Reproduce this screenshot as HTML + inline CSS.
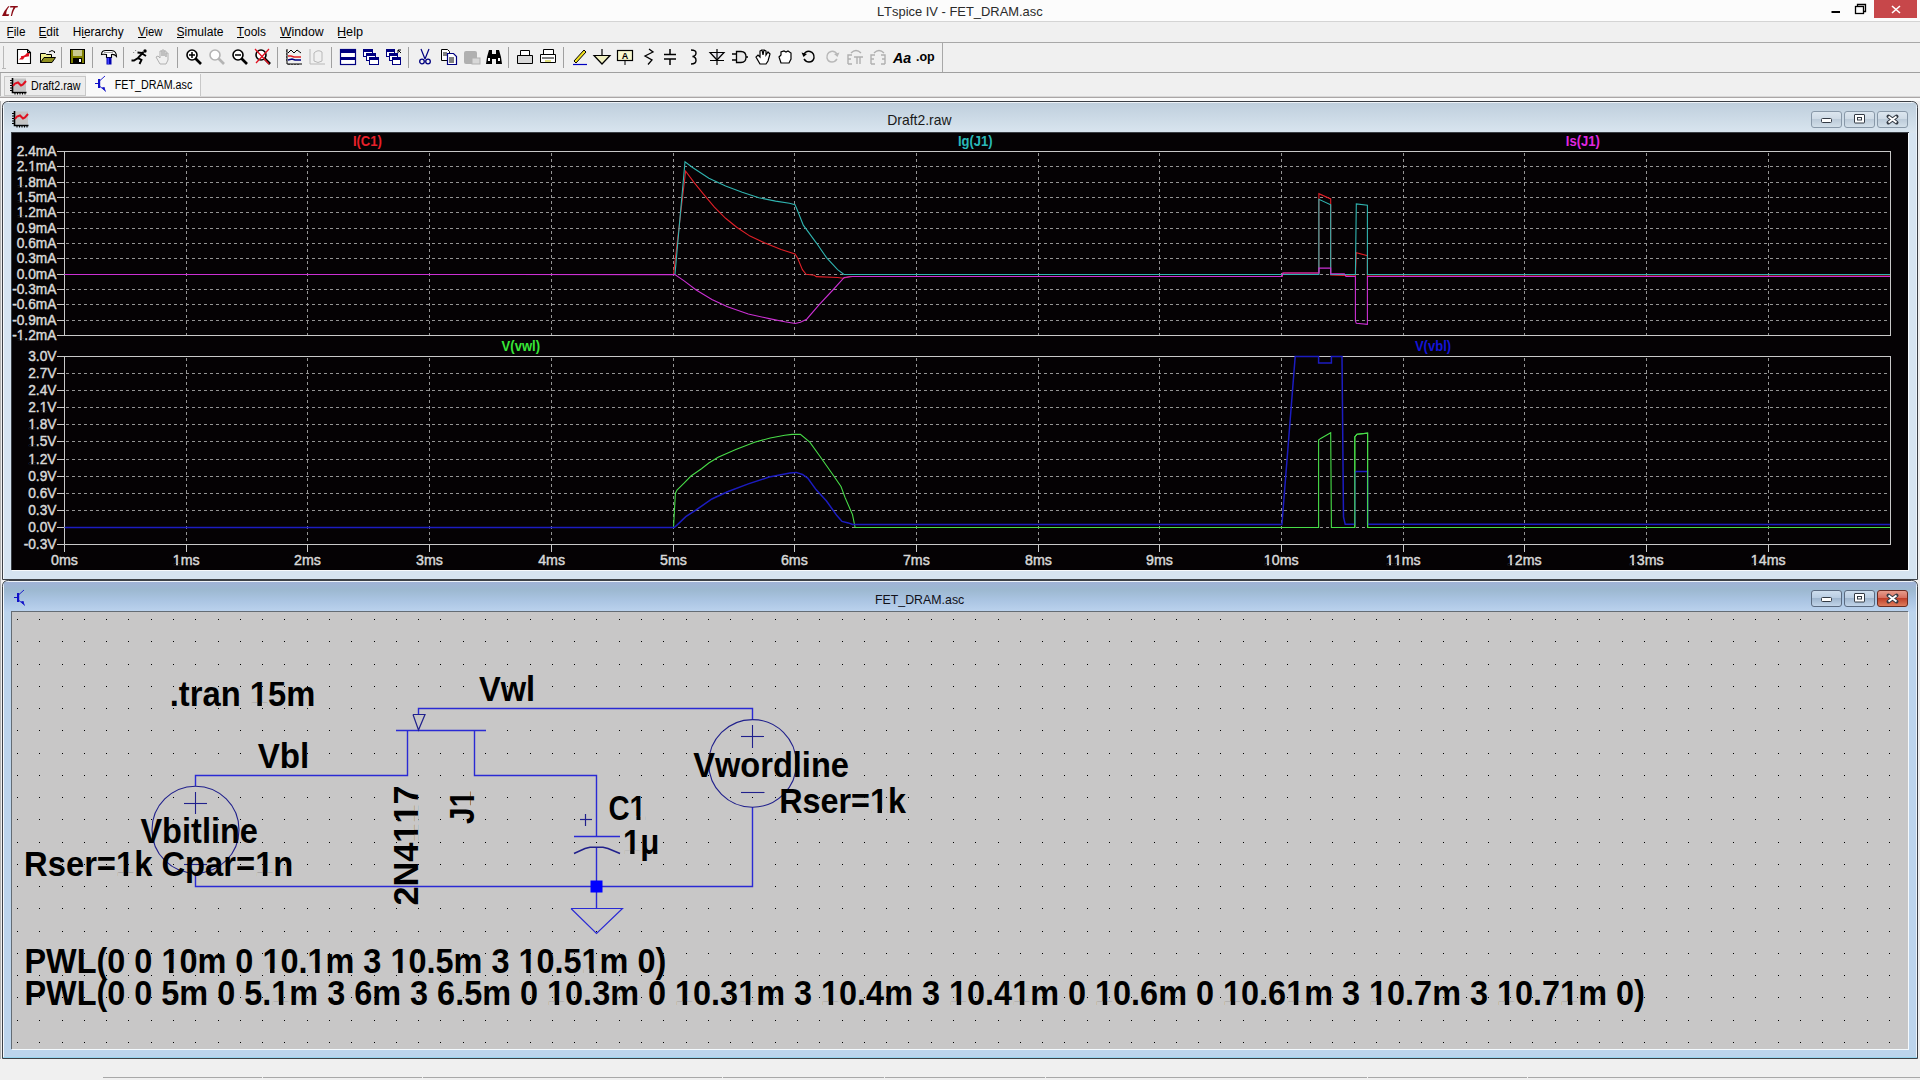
<!DOCTYPE html>
<html><head><meta charset="utf-8"><style>
body{margin:0;width:1920px;height:1080px;overflow:hidden;background:#f0f0f0}
svg{position:absolute;left:0;top:0;display:block}
text{font-family:"Liberation Sans", sans-serif}
</style></head><body>
<svg width="1920" height="1080" viewBox="0 0 1920 1080" font-family='"Liberation Sans", sans-serif'>
<rect x="0" y="0" width="1920" height="1080" fill="#f0f0f0" /><rect x="0" y="0" width="1920" height="21" fill="#fcfcfc" /><line x1="0" y1="21.5" x2="1920" y2="21.5" stroke="#d4d4d4" stroke-width="1"/><path d="M2,16 L8.5,16 L9.3,14.3 L6.2,14.3 Q6,10 9.6,6.2 L8.2,6.2 Q4.5,10 2,16 Z" fill="#8a0a14"/><path d="M10.8,16 L12,16 Q13.5,10 15.6,7.6 L17.4,7.6 L18,6 L10.3,6 L10,7.6 L13.5,7.6 Q11.5,11 10.8,16 Z" fill="#8a0a14"/><g transform="translate(876.94,15.8) scale(0.9942,1)"><text style="font-kerning:none" font-size="13" font-weight="normal" fill="#2a2a2a">LTspice IV - FET_DRAM.asc</text></g><rect x="1831.5" y="11" width="8.5" height="2" fill="#000" /><rect x="1855.5" y="6.5" width="8" height="7" fill="none" stroke="#000" stroke-width="1.3"/><path d="M1857.5,6.5 V4.5 H1865.5 V11.5 H1863.5" fill="none" stroke="#000" stroke-width="1.3"/><rect x="1874" y="0" width="43" height="18" fill="#c7474a" /><path d="M1892,6 L1900,13 M1900,6 L1892,13" stroke="#fff" stroke-width="1.6"/><rect x="0" y="22" width="1920" height="20" fill="#f0f0f0" /><line x1="0" y1="42.5" x2="1920" y2="42.5" stroke="#a8a8a8" stroke-width="1"/><g transform="translate(6.53,36) scale(0.9821,1)"><text style="font-kerning:none" font-size="12" font-weight="normal" fill="#000">File</text></g><g transform="translate(38.43,36) scale(0.9895,1)"><text style="font-kerning:none" font-size="12" font-weight="normal" fill="#000">Edit</text></g><g transform="translate(72.77,36) scale(0.9933,1)"><text style="font-kerning:none" font-size="12" font-weight="normal" fill="#000">Hierarchy</text></g><g transform="translate(137.95,36) scale(0.9428,1)"><text style="font-kerning:none" font-size="12" font-weight="normal" fill="#000">View</text></g><g transform="translate(176.45,36) scale(1.0086,1)"><text style="font-kerning:none" font-size="12" font-weight="normal" fill="#000">Simulate</text></g><g transform="translate(236.73,36) scale(0.9951,1)"><text style="font-kerning:none" font-size="12" font-weight="normal" fill="#000">Tools</text></g><g transform="translate(279.95,36) scale(1.0256,1)"><text style="font-kerning:none" font-size="12" font-weight="normal" fill="#000">Window</text></g><g transform="translate(336.96,36) scale(1.0564,1)"><text style="font-kerning:none" font-size="12" font-weight="normal" fill="#000">Help</text></g><line x1="7.5" y1="37.5" x2="14" y2="37.5" stroke="#000" stroke-width="1"/><line x1="39.4" y1="37.5" x2="46.5" y2="37.5" stroke="#000" stroke-width="1"/><line x1="82" y1="37.5" x2="85.5" y2="37.5" stroke="#000" stroke-width="1"/><line x1="138" y1="37.5" x2="146" y2="37.5" stroke="#000" stroke-width="1"/><line x1="177" y1="37.5" x2="184" y2="37.5" stroke="#000" stroke-width="1"/><line x1="237" y1="37.5" x2="244" y2="37.5" stroke="#000" stroke-width="1"/><line x1="280" y1="37.5" x2="291" y2="37.5" stroke="#000" stroke-width="1"/><line x1="338" y1="37.5" x2="346" y2="37.5" stroke="#000" stroke-width="1"/><rect x="0" y="43" width="1920" height="29" fill="#f0f0f0" /><line x1="0" y1="72.5" x2="1920" y2="72.5" stroke="#a0a0a0" stroke-width="1"/><line x1="3.5" y1="46" x2="3.5" y2="69" stroke="#b8b8b8" stroke-width="1"/><line x1="2" y1="68.5" x2="6" y2="68.5" stroke="#b8b8b8" stroke-width="1"/><line x1="942.5" y1="42" x2="942.5" y2="72" stroke="#a8a8a8" stroke-width="1"/><line x1="61.5" y1="47" x2="61.5" y2="68" stroke="#a0a0a0" stroke-width="1"/><line x1="92.5" y1="47" x2="92.5" y2="68" stroke="#a0a0a0" stroke-width="1"/><line x1="123.5" y1="47" x2="123.5" y2="68" stroke="#a0a0a0" stroke-width="1"/><line x1="177.5" y1="47" x2="177.5" y2="68" stroke="#a0a0a0" stroke-width="1"/><line x1="277.5" y1="47" x2="277.5" y2="68" stroke="#a0a0a0" stroke-width="1"/><line x1="331.5" y1="47" x2="331.5" y2="68" stroke="#a0a0a0" stroke-width="1"/><line x1="408.5" y1="47" x2="408.5" y2="68" stroke="#a0a0a0" stroke-width="1"/><line x1="508.5" y1="47" x2="508.5" y2="68" stroke="#a0a0a0" stroke-width="1"/><line x1="563.5" y1="47" x2="563.5" y2="68" stroke="#a0a0a0" stroke-width="1"/><rect x="0" y="73" width="1920" height="24" fill="#f0f0f0" /><line x1="0.5" y1="73" x2="0.5" y2="1080" stroke="#b4b4b4" stroke-width="1"/><rect x="4.5" y="76.5" width="81" height="19" fill="#ececec" stroke="#c8c8c8"/><rect x="86" y="74" width="114" height="22" fill="#f9f9f9" /><line x1="200.5" y1="74" x2="200.5" y2="96" stroke="#c8c8c8" stroke-width="1"/><g transform="translate(31.12,90) scale(0.8917,1)"><text style="font-kerning:none" font-size="12" font-weight="normal" fill="#000">Draft2.raw</text></g><g transform="translate(114.82,88.8) scale(0.8937,1)"><text style="font-kerning:none" font-size="12" font-weight="normal" fill="#000">FET_DRAM.asc</text></g><line x1="0" y1="96.5" x2="1920" y2="96.5" stroke="#d8d8d8" stroke-width="1"/><g transform="translate(10,78)"><rect x="3" y="0.5" width="13" height="13" fill="#c4c4c4"/><path d="M2.5,0 V14.5 H16.5" fill="none" stroke="#000" stroke-width="1.6"/><path d="M0,2.5 H2.5 M0,5 H2.5 M0,7.5 H2.5 M0,10 H2.5 M0,12.5 H2.5 M5,14 V16.5 M7.5,14 V16.5 M10,14 V16.5 M12.5,14 V16.5 M15,14 V16.5" stroke="#000" stroke-width="1.1"/><path d="M3,8 L5,5.5 L8,4.5 L11,7.5 L13,6.5 L16,3" fill="none" stroke="#e01020" stroke-width="2"/></g><g transform="translate(95,76)" fill="none" stroke="#1010c8"><path d="M0,7.5 H3.5" stroke-width="1"/><rect x="3" y="3" width="2.2" height="9" fill="#1010c8" stroke="none"/><path d="M5,4.5 L10,0 M5,10.5 L11,15.5" stroke-width="0.9"/><path d="M6.5,11.5 L10.5,15 L9.5,11 Z" fill="#1010c8" stroke="none"/></g><line x1="0" y1="97.5" x2="1920" y2="97.5" stroke="#aaa6a6" stroke-width="1"/><rect x="0" y="98" width="1920" height="3" fill="#fbfbfb" /><defs>
<linearGradient id="t1" x1="0" y1="0" x2="0" y2="1"><stop offset="0" stop-color="#bfcfdd"/><stop offset="1" stop-color="#d9e5ef"/></linearGradient>
<linearGradient id="t2" x1="0" y1="0" x2="0" y2="1"><stop offset="0" stop-color="#a0b2d6"/><stop offset="0.25" stop-color="#9cb8d0"/><stop offset="0.6" stop-color="#aac4e2"/><stop offset="1" stop-color="#bcd3ee"/></linearGradient>
<linearGradient id="bt" x1="0" y1="0" x2="0" y2="1"><stop offset="0" stop-color="#dde7f0"/><stop offset="0.45" stop-color="#cfdbe6"/><stop offset="0.5" stop-color="#bccbd9"/><stop offset="1" stop-color="#d4e0ea"/></linearGradient>
<linearGradient id="bt2" x1="0" y1="0" x2="0" y2="1"><stop offset="0" stop-color="#cfdeee"/><stop offset="0.45" stop-color="#b9cde2"/><stop offset="0.5" stop-color="#9fb6cf"/><stop offset="1" stop-color="#c4d6ea"/></linearGradient>
<linearGradient id="cl2" x1="0" y1="0" x2="0" y2="1"><stop offset="0" stop-color="#e8a090"/><stop offset="0.45" stop-color="#d87060"/><stop offset="0.5" stop-color="#c0402a"/><stop offset="1" stop-color="#e08060"/></linearGradient>
<pattern id="dots" x="17" y="619" width="22.286" height="22.25" patternUnits="userSpaceOnUse"><rect x="0" y="0" width="1.1" height="1.1" fill="#000"/></pattern>
</defs><clipPath id="clip101"><path d="M3,579 V108 Q3,102 9,102 H1911 Q1917,102 1917,108 V579 Z"/></clipPath><path d="M2.5,579.5 V107.5 Q2.5,101.5 8.5,101.5 H1911.5 Q1917.5,101.5 1917.5,107.5 V579.5 Z" fill="#d6e4f1" stroke="#3c4046" stroke-width="1"/><g clip-path="url(#clip101)"><rect x="3" y="102" width="1914" height="1" fill="#eef3f8" /><rect x="3" y="103" width="1914" height="30" fill="url(#t1)" /><line x1="3.5" y1="103" x2="3.5" y2="579" stroke="#f4f8fc" stroke-width="1"/><line x1="1916.5" y1="103" x2="1916.5" y2="579" stroke="#eaf2fa" stroke-width="1"/></g><rect x="11" y="132" width="1898" height="438" fill="#3a3e44" /><rect x="12" y="133" width="1896" height="437" fill="#050204" /><rect x="12" y="570" width="1896" height="1" fill="#f6f9fc" /><line x1="1908.5" y1="133" x2="1908.5" y2="571" stroke="#f6f9fc" stroke-width="1"/><g transform="translate(887.26,124.9) scale(0.9959,1)"><text style="font-kerning:none" font-size="14" font-weight="normal" fill="#1a1a1a">Draft2.raw</text></g><g transform="translate(12,111)"><rect x="3" y="0.5" width="13" height="13" fill="#c4c4c4"/><path d="M2.5,0 V14.5 H16.5" fill="none" stroke="#000" stroke-width="1.6"/><path d="M0,2.5 H2.5 M0,5 H2.5 M0,7.5 H2.5 M0,10 H2.5 M0,12.5 H2.5 M5,14 V16.5 M7.5,14 V16.5 M10,14 V16.5 M12.5,14 V16.5 M15,14 V16.5" stroke="#000" stroke-width="1.1"/><path d="M3,8 L5,5.5 L8,4.5 L11,7.5 L13,6.5 L16,3" fill="none" stroke="#e01020" stroke-width="2"/></g><rect x="1811.5" y="111.5" width="30" height="16" rx="2.5" fill="url(#bt)" stroke="#8898a8"/><rect x="1844.5" y="111.5" width="30" height="16" rx="2.5" fill="url(#bt)" stroke="#8898a8"/><rect x="1877.5" y="111.5" width="30" height="16" rx="2.5" fill="url(#bt)" stroke="#8898a8"/><rect x="1821.5" y="118.5" width="10" height="4" rx="1" fill="#fff" stroke="#333a44"/><rect x="1854.5" y="114.5" width="10" height="8.5" rx="0.5" fill="#fff" stroke="#333a44"/><rect x="1857.5" y="117.5" width="4" height="2.5" fill="none" stroke="#333a44"/><path d="M1888.5,116.5 L1896.5,122.5 M1896.5,116.5 L1888.5,122.5" stroke="#333a44" stroke-width="4" stroke-linecap="round"/><path d="M1888.5,116.5 L1896.5,122.5 M1896.5,116.5 L1888.5,122.5" stroke="#fff" stroke-width="2"/><line x1="57" y1="151.5" x2="1891" y2="151.5" stroke="#c8c8c8" stroke-width="1"/><line x1="57" y1="166.5" x2="64" y2="166.5" stroke="#c8c8c8" stroke-width="1"/><line x1="66" y1="166.5" x2="1890" y2="166.5" stroke="#949494" stroke-width="1" stroke-dasharray="3 3"/><line x1="57" y1="182.5" x2="64" y2="182.5" stroke="#c8c8c8" stroke-width="1"/><line x1="66" y1="182.5" x2="1890" y2="182.5" stroke="#949494" stroke-width="1" stroke-dasharray="3 3"/><line x1="57" y1="197.5" x2="64" y2="197.5" stroke="#c8c8c8" stroke-width="1"/><line x1="66" y1="197.5" x2="1890" y2="197.5" stroke="#949494" stroke-width="1" stroke-dasharray="3 3"/><line x1="57" y1="212.5" x2="64" y2="212.5" stroke="#c8c8c8" stroke-width="1"/><line x1="66" y1="212.5" x2="1890" y2="212.5" stroke="#949494" stroke-width="1" stroke-dasharray="3 3"/><line x1="57" y1="228.5" x2="64" y2="228.5" stroke="#c8c8c8" stroke-width="1"/><line x1="66" y1="228.5" x2="1890" y2="228.5" stroke="#949494" stroke-width="1" stroke-dasharray="3 3"/><line x1="57" y1="243.5" x2="64" y2="243.5" stroke="#c8c8c8" stroke-width="1"/><line x1="66" y1="243.5" x2="1890" y2="243.5" stroke="#949494" stroke-width="1" stroke-dasharray="3 3"/><line x1="57" y1="258.5" x2="64" y2="258.5" stroke="#c8c8c8" stroke-width="1"/><line x1="66" y1="258.5" x2="1890" y2="258.5" stroke="#949494" stroke-width="1" stroke-dasharray="3 3"/><line x1="57" y1="274.5" x2="64" y2="274.5" stroke="#c8c8c8" stroke-width="1"/><line x1="66" y1="274.5" x2="1890" y2="274.5" stroke="#949494" stroke-width="1" stroke-dasharray="3 3"/><line x1="57" y1="289.5" x2="64" y2="289.5" stroke="#c8c8c8" stroke-width="1"/><line x1="66" y1="289.5" x2="1890" y2="289.5" stroke="#949494" stroke-width="1" stroke-dasharray="3 3"/><line x1="57" y1="304.5" x2="64" y2="304.5" stroke="#c8c8c8" stroke-width="1"/><line x1="66" y1="304.5" x2="1890" y2="304.5" stroke="#949494" stroke-width="1" stroke-dasharray="3 3"/><line x1="57" y1="320.5" x2="64" y2="320.5" stroke="#c8c8c8" stroke-width="1"/><line x1="66" y1="320.5" x2="1890" y2="320.5" stroke="#949494" stroke-width="1" stroke-dasharray="3 3"/><line x1="57" y1="335.5" x2="1891" y2="335.5" stroke="#c8c8c8" stroke-width="1"/><line x1="57" y1="356.5" x2="1891" y2="356.5" stroke="#c8c8c8" stroke-width="1"/><line x1="57" y1="373.5" x2="64" y2="373.5" stroke="#c8c8c8" stroke-width="1"/><line x1="66" y1="373.5" x2="1890" y2="373.5" stroke="#949494" stroke-width="1" stroke-dasharray="3 3"/><line x1="57" y1="390.5" x2="64" y2="390.5" stroke="#c8c8c8" stroke-width="1"/><line x1="66" y1="390.5" x2="1890" y2="390.5" stroke="#949494" stroke-width="1" stroke-dasharray="3 3"/><line x1="57" y1="407.5" x2="64" y2="407.5" stroke="#c8c8c8" stroke-width="1"/><line x1="66" y1="407.5" x2="1890" y2="407.5" stroke="#949494" stroke-width="1" stroke-dasharray="3 3"/><line x1="57" y1="424.5" x2="64" y2="424.5" stroke="#c8c8c8" stroke-width="1"/><line x1="66" y1="424.5" x2="1890" y2="424.5" stroke="#949494" stroke-width="1" stroke-dasharray="3 3"/><line x1="57" y1="441.5" x2="64" y2="441.5" stroke="#c8c8c8" stroke-width="1"/><line x1="66" y1="441.5" x2="1890" y2="441.5" stroke="#949494" stroke-width="1" stroke-dasharray="3 3"/><line x1="57" y1="459.5" x2="64" y2="459.5" stroke="#c8c8c8" stroke-width="1"/><line x1="66" y1="459.5" x2="1890" y2="459.5" stroke="#949494" stroke-width="1" stroke-dasharray="3 3"/><line x1="57" y1="476.5" x2="64" y2="476.5" stroke="#c8c8c8" stroke-width="1"/><line x1="66" y1="476.5" x2="1890" y2="476.5" stroke="#949494" stroke-width="1" stroke-dasharray="3 3"/><line x1="57" y1="493.5" x2="64" y2="493.5" stroke="#c8c8c8" stroke-width="1"/><line x1="66" y1="493.5" x2="1890" y2="493.5" stroke="#949494" stroke-width="1" stroke-dasharray="3 3"/><line x1="57" y1="510.5" x2="64" y2="510.5" stroke="#c8c8c8" stroke-width="1"/><line x1="66" y1="510.5" x2="1890" y2="510.5" stroke="#949494" stroke-width="1" stroke-dasharray="3 3"/><line x1="57" y1="527.5" x2="64" y2="527.5" stroke="#c8c8c8" stroke-width="1"/><line x1="66" y1="527.5" x2="1890" y2="527.5" stroke="#949494" stroke-width="1" stroke-dasharray="3 3"/><line x1="57" y1="544.5" x2="1891" y2="544.5" stroke="#c8c8c8" stroke-width="1"/><line x1="64.5" y1="151" x2="64.5" y2="336" stroke="#c8c8c8" stroke-width="1"/><line x1="1890.5" y1="151" x2="1890.5" y2="336" stroke="#c8c8c8" stroke-width="1"/><line x1="64.5" y1="356" x2="64.5" y2="552" stroke="#c8c8c8" stroke-width="1"/><line x1="1890.5" y1="356" x2="1890.5" y2="545" stroke="#c8c8c8" stroke-width="1"/><line x1="186.5" y1="153" x2="186.5" y2="335" stroke="#949494" stroke-width="1" stroke-dasharray="3 3"/><line x1="186.5" y1="358" x2="186.5" y2="544" stroke="#949494" stroke-width="1" stroke-dasharray="3 3"/><line x1="186.5" y1="544" x2="186.5" y2="552" stroke="#c8c8c8" stroke-width="1"/><line x1="307.5" y1="153" x2="307.5" y2="335" stroke="#949494" stroke-width="1" stroke-dasharray="3 3"/><line x1="307.5" y1="358" x2="307.5" y2="544" stroke="#949494" stroke-width="1" stroke-dasharray="3 3"/><line x1="307.5" y1="544" x2="307.5" y2="552" stroke="#c8c8c8" stroke-width="1"/><line x1="429.5" y1="153" x2="429.5" y2="335" stroke="#949494" stroke-width="1" stroke-dasharray="3 3"/><line x1="429.5" y1="358" x2="429.5" y2="544" stroke="#949494" stroke-width="1" stroke-dasharray="3 3"/><line x1="429.5" y1="544" x2="429.5" y2="552" stroke="#c8c8c8" stroke-width="1"/><line x1="551.5" y1="153" x2="551.5" y2="335" stroke="#949494" stroke-width="1" stroke-dasharray="3 3"/><line x1="551.5" y1="358" x2="551.5" y2="544" stroke="#949494" stroke-width="1" stroke-dasharray="3 3"/><line x1="551.5" y1="544" x2="551.5" y2="552" stroke="#c8c8c8" stroke-width="1"/><line x1="673.5" y1="153" x2="673.5" y2="335" stroke="#949494" stroke-width="1" stroke-dasharray="3 3"/><line x1="673.5" y1="358" x2="673.5" y2="544" stroke="#949494" stroke-width="1" stroke-dasharray="3 3"/><line x1="673.5" y1="544" x2="673.5" y2="552" stroke="#c8c8c8" stroke-width="1"/><line x1="794.5" y1="153" x2="794.5" y2="335" stroke="#949494" stroke-width="1" stroke-dasharray="3 3"/><line x1="794.5" y1="358" x2="794.5" y2="544" stroke="#949494" stroke-width="1" stroke-dasharray="3 3"/><line x1="794.5" y1="544" x2="794.5" y2="552" stroke="#c8c8c8" stroke-width="1"/><line x1="916.5" y1="153" x2="916.5" y2="335" stroke="#949494" stroke-width="1" stroke-dasharray="3 3"/><line x1="916.5" y1="358" x2="916.5" y2="544" stroke="#949494" stroke-width="1" stroke-dasharray="3 3"/><line x1="916.5" y1="544" x2="916.5" y2="552" stroke="#c8c8c8" stroke-width="1"/><line x1="1038.5" y1="153" x2="1038.5" y2="335" stroke="#949494" stroke-width="1" stroke-dasharray="3 3"/><line x1="1038.5" y1="358" x2="1038.5" y2="544" stroke="#949494" stroke-width="1" stroke-dasharray="3 3"/><line x1="1038.5" y1="544" x2="1038.5" y2="552" stroke="#c8c8c8" stroke-width="1"/><line x1="1159.5" y1="153" x2="1159.5" y2="335" stroke="#949494" stroke-width="1" stroke-dasharray="3 3"/><line x1="1159.5" y1="358" x2="1159.5" y2="544" stroke="#949494" stroke-width="1" stroke-dasharray="3 3"/><line x1="1159.5" y1="544" x2="1159.5" y2="552" stroke="#c8c8c8" stroke-width="1"/><line x1="1281.5" y1="153" x2="1281.5" y2="335" stroke="#949494" stroke-width="1" stroke-dasharray="3 3"/><line x1="1281.5" y1="358" x2="1281.5" y2="544" stroke="#949494" stroke-width="1" stroke-dasharray="3 3"/><line x1="1281.5" y1="544" x2="1281.5" y2="552" stroke="#c8c8c8" stroke-width="1"/><line x1="1403.5" y1="153" x2="1403.5" y2="335" stroke="#949494" stroke-width="1" stroke-dasharray="3 3"/><line x1="1403.5" y1="358" x2="1403.5" y2="544" stroke="#949494" stroke-width="1" stroke-dasharray="3 3"/><line x1="1403.5" y1="544" x2="1403.5" y2="552" stroke="#c8c8c8" stroke-width="1"/><line x1="1524.5" y1="153" x2="1524.5" y2="335" stroke="#949494" stroke-width="1" stroke-dasharray="3 3"/><line x1="1524.5" y1="358" x2="1524.5" y2="544" stroke="#949494" stroke-width="1" stroke-dasharray="3 3"/><line x1="1524.5" y1="544" x2="1524.5" y2="552" stroke="#c8c8c8" stroke-width="1"/><line x1="1646.5" y1="153" x2="1646.5" y2="335" stroke="#949494" stroke-width="1" stroke-dasharray="3 3"/><line x1="1646.5" y1="358" x2="1646.5" y2="544" stroke="#949494" stroke-width="1" stroke-dasharray="3 3"/><line x1="1646.5" y1="544" x2="1646.5" y2="552" stroke="#c8c8c8" stroke-width="1"/><line x1="1768.5" y1="153" x2="1768.5" y2="335" stroke="#949494" stroke-width="1" stroke-dasharray="3 3"/><line x1="1768.5" y1="358" x2="1768.5" y2="544" stroke="#949494" stroke-width="1" stroke-dasharray="3 3"/><line x1="1768.5" y1="544" x2="1768.5" y2="552" stroke="#c8c8c8" stroke-width="1"/><g font-family='"Liberation Sans", sans-serif'><g transform="translate(16.72,156) scale(0.95,1)"><text style="font-kerning:none" font-size="14.5" fill="#d8d8d8" stroke="#d8d8d8" stroke-width="0.45">2.4mA</text></g><g transform="translate(16.72,171) scale(0.95,1)"><text style="font-kerning:none" font-size="14.5" fill="#d8d8d8" stroke="#d8d8d8" stroke-width="0.45">2.1mA</text><rect x="12.40" y="-1.53" width="3.04" height="2.28" fill="#050204"/><rect x="17.32" y="-1.53" width="3.23" height="2.28" fill="#050204"/></g><g transform="translate(16.72,187) scale(0.95,1)"><text style="font-kerning:none" font-size="14.5" fill="#d8d8d8" stroke="#d8d8d8" stroke-width="0.45">1.8mA</text><rect x="0.30" y="-1.53" width="3.04" height="2.28" fill="#050204"/><rect x="5.23" y="-1.53" width="3.23" height="2.28" fill="#050204"/></g><g transform="translate(16.72,202) scale(0.95,1)"><text style="font-kerning:none" font-size="14.5" fill="#d8d8d8" stroke="#d8d8d8" stroke-width="0.45">1.5mA</text><rect x="0.30" y="-1.53" width="3.04" height="2.28" fill="#050204"/><rect x="5.23" y="-1.53" width="3.23" height="2.28" fill="#050204"/></g><g transform="translate(16.72,217) scale(0.95,1)"><text style="font-kerning:none" font-size="14.5" fill="#d8d8d8" stroke="#d8d8d8" stroke-width="0.45">1.2mA</text><rect x="0.30" y="-1.53" width="3.04" height="2.28" fill="#050204"/><rect x="5.23" y="-1.53" width="3.23" height="2.28" fill="#050204"/></g><g transform="translate(16.72,233) scale(0.95,1)"><text style="font-kerning:none" font-size="14.5" fill="#d8d8d8" stroke="#d8d8d8" stroke-width="0.45">0.9mA</text></g><g transform="translate(16.72,248) scale(0.95,1)"><text style="font-kerning:none" font-size="14.5" fill="#d8d8d8" stroke="#d8d8d8" stroke-width="0.45">0.6mA</text></g><g transform="translate(16.72,263) scale(0.95,1)"><text style="font-kerning:none" font-size="14.5" fill="#d8d8d8" stroke="#d8d8d8" stroke-width="0.45">0.3mA</text></g><g transform="translate(16.72,279) scale(0.95,1)"><text style="font-kerning:none" font-size="14.5" fill="#d8d8d8" stroke="#d8d8d8" stroke-width="0.45">0.0mA</text></g><g transform="translate(12.13,294) scale(0.95,1)"><text style="font-kerning:none" font-size="14.5" fill="#d8d8d8" stroke="#d8d8d8" stroke-width="0.45">-0.3mA</text></g><g transform="translate(12.13,309) scale(0.95,1)"><text style="font-kerning:none" font-size="14.5" fill="#d8d8d8" stroke="#d8d8d8" stroke-width="0.45">-0.6mA</text></g><g transform="translate(12.13,325) scale(0.95,1)"><text style="font-kerning:none" font-size="14.5" fill="#d8d8d8" stroke="#d8d8d8" stroke-width="0.45">-0.9mA</text></g><g transform="translate(12.13,340) scale(0.95,1)"><text style="font-kerning:none" font-size="14.5" fill="#d8d8d8" stroke="#d8d8d8" stroke-width="0.45">-1.2mA</text><rect x="5.13" y="-1.53" width="3.04" height="2.28" fill="#050204"/><rect x="10.06" y="-1.53" width="3.23" height="2.28" fill="#050204"/></g><g transform="translate(28.22,361) scale(0.95,1)"><text style="font-kerning:none" font-size="14.5" fill="#d8d8d8" stroke="#d8d8d8" stroke-width="0.45">3.0V</text></g><g transform="translate(28.22,378) scale(0.95,1)"><text style="font-kerning:none" font-size="14.5" fill="#d8d8d8" stroke="#d8d8d8" stroke-width="0.45">2.7V</text></g><g transform="translate(28.22,395) scale(0.95,1)"><text style="font-kerning:none" font-size="14.5" fill="#d8d8d8" stroke="#d8d8d8" stroke-width="0.45">2.4V</text></g><g transform="translate(28.22,412) scale(0.95,1)"><text style="font-kerning:none" font-size="14.5" fill="#d8d8d8" stroke="#d8d8d8" stroke-width="0.45">2.1V</text><rect x="12.40" y="-1.53" width="3.04" height="2.28" fill="#050204"/><rect x="17.32" y="-1.53" width="3.23" height="2.28" fill="#050204"/></g><g transform="translate(28.22,429) scale(0.95,1)"><text style="font-kerning:none" font-size="14.5" fill="#d8d8d8" stroke="#d8d8d8" stroke-width="0.45">1.8V</text><rect x="0.30" y="-1.53" width="3.04" height="2.28" fill="#050204"/><rect x="5.23" y="-1.53" width="3.23" height="2.28" fill="#050204"/></g><g transform="translate(28.22,446) scale(0.95,1)"><text style="font-kerning:none" font-size="14.5" fill="#d8d8d8" stroke="#d8d8d8" stroke-width="0.45">1.5V</text><rect x="0.30" y="-1.53" width="3.04" height="2.28" fill="#050204"/><rect x="5.23" y="-1.53" width="3.23" height="2.28" fill="#050204"/></g><g transform="translate(28.22,464) scale(0.95,1)"><text style="font-kerning:none" font-size="14.5" fill="#d8d8d8" stroke="#d8d8d8" stroke-width="0.45">1.2V</text><rect x="0.30" y="-1.53" width="3.04" height="2.28" fill="#050204"/><rect x="5.23" y="-1.53" width="3.23" height="2.28" fill="#050204"/></g><g transform="translate(28.22,481) scale(0.95,1)"><text style="font-kerning:none" font-size="14.5" fill="#d8d8d8" stroke="#d8d8d8" stroke-width="0.45">0.9V</text></g><g transform="translate(28.22,498) scale(0.95,1)"><text style="font-kerning:none" font-size="14.5" fill="#d8d8d8" stroke="#d8d8d8" stroke-width="0.45">0.6V</text></g><g transform="translate(28.22,515) scale(0.95,1)"><text style="font-kerning:none" font-size="14.5" fill="#d8d8d8" stroke="#d8d8d8" stroke-width="0.45">0.3V</text></g><g transform="translate(28.22,532) scale(0.95,1)"><text style="font-kerning:none" font-size="14.5" fill="#d8d8d8" stroke="#d8d8d8" stroke-width="0.45">0.0V</text></g><g transform="translate(23.64,549) scale(0.95,1)"><text style="font-kerning:none" font-size="14.5" fill="#d8d8d8" stroke="#d8d8d8" stroke-width="0.45">-0.3V</text></g><g transform="translate(51.06,565) scale(0.98,1)"><text style="font-kerning:none" font-size="14.5" fill="#d8d8d8" stroke="#d8d8d8" stroke-width="0.45">0ms</text></g><g transform="translate(172.79,565) scale(0.98,1)"><text style="font-kerning:none" font-size="14.5" fill="#d8d8d8" stroke="#d8d8d8" stroke-width="0.45">1ms</text><rect x="0.30" y="-1.53" width="3.04" height="2.28" fill="#050204"/><rect x="5.23" y="-1.53" width="3.23" height="2.28" fill="#050204"/></g><g transform="translate(293.98,565) scale(0.98,1)"><text style="font-kerning:none" font-size="14.5" fill="#d8d8d8" stroke="#d8d8d8" stroke-width="0.45">2ms</text></g><g transform="translate(416.06,565) scale(0.98,1)"><text style="font-kerning:none" font-size="14.5" fill="#d8d8d8" stroke="#d8d8d8" stroke-width="0.45">3ms</text></g><g transform="translate(538.17,565) scale(0.98,1)"><text style="font-kerning:none" font-size="14.5" fill="#d8d8d8" stroke="#d8d8d8" stroke-width="0.45">4ms</text></g><g transform="translate(660.05,565) scale(0.98,1)"><text style="font-kerning:none" font-size="14.5" fill="#d8d8d8" stroke="#d8d8d8" stroke-width="0.45">5ms</text></g><g transform="translate(780.97,565) scale(0.98,1)"><text style="font-kerning:none" font-size="14.5" fill="#d8d8d8" stroke="#d8d8d8" stroke-width="0.45">6ms</text></g><g transform="translate(902.97,565) scale(0.98,1)"><text style="font-kerning:none" font-size="14.5" fill="#d8d8d8" stroke="#d8d8d8" stroke-width="0.45">7ms</text></g><g transform="translate(1025.03,565) scale(0.98,1)"><text style="font-kerning:none" font-size="14.5" fill="#d8d8d8" stroke="#d8d8d8" stroke-width="0.45">8ms</text></g><g transform="translate(1146.00,565) scale(0.98,1)"><text style="font-kerning:none" font-size="14.5" fill="#d8d8d8" stroke="#d8d8d8" stroke-width="0.45">9ms</text></g><g transform="translate(1263.84,565) scale(0.98,1)"><text style="font-kerning:none" font-size="14.5" fill="#d8d8d8" stroke="#d8d8d8" stroke-width="0.45">10ms</text><rect x="0.30" y="-1.53" width="3.04" height="2.28" fill="#050204"/><rect x="5.23" y="-1.53" width="3.23" height="2.28" fill="#050204"/></g><g transform="translate(1385.84,565) scale(0.98,1)"><text style="font-kerning:none" font-size="14.5" fill="#d8d8d8" stroke="#d8d8d8" stroke-width="0.45">11ms</text><rect x="0.30" y="-1.53" width="3.04" height="2.28" fill="#050204"/><rect x="5.23" y="-1.53" width="3.23" height="2.28" fill="#050204"/><rect x="8.37" y="-1.53" width="3.04" height="2.28" fill="#050204"/><rect x="13.29" y="-1.53" width="3.23" height="2.28" fill="#050204"/></g><g transform="translate(1506.84,565) scale(0.98,1)"><text style="font-kerning:none" font-size="14.5" fill="#d8d8d8" stroke="#d8d8d8" stroke-width="0.45">12ms</text><rect x="0.30" y="-1.53" width="3.04" height="2.28" fill="#050204"/><rect x="5.23" y="-1.53" width="3.23" height="2.28" fill="#050204"/></g><g transform="translate(1628.84,565) scale(0.98,1)"><text style="font-kerning:none" font-size="14.5" fill="#d8d8d8" stroke="#d8d8d8" stroke-width="0.45">13ms</text><rect x="0.30" y="-1.53" width="3.04" height="2.28" fill="#050204"/><rect x="5.23" y="-1.53" width="3.23" height="2.28" fill="#050204"/></g><g transform="translate(1750.84,565) scale(0.98,1)"><text style="font-kerning:none" font-size="14.5" fill="#d8d8d8" stroke="#d8d8d8" stroke-width="0.45">14ms</text><rect x="0.30" y="-1.53" width="3.04" height="2.28" fill="#050204"/><rect x="5.23" y="-1.53" width="3.23" height="2.28" fill="#050204"/></g></g><polyline points="673.5,274.5 685.6,171.1 694.4,182.8 703.3,193.9 714.4,207.2 725.6,218.3 736.7,227.2 750.0,236.1 764.4,242.8 781.1,249.4 795.0,253.9 797.8,258.5 802.4,269.6 806.1,274.3 814.4,275.2 816.3,276.6 837.6,277.5 843.1,278.2 850.0,276.5 1282.0,276.5 1283.0,273.0 1318.9,273.0 1318.9,273.0 1318.9,193.7 1330.7,198.9 1330.7,275.0 1355.4,276.0 1356.3,252.6 1367.4,255.7 1367.4,276.0 1890.0,276.0" fill="none" stroke="#e02028" stroke-width="1.1" stroke-linejoin="miter"/><polyline points="64.5,274.5 673.5,274.5 675.0,274.0 685.0,161.7 692.2,167.2 708.9,178.3 725.6,186.1 742.2,192.2 758.9,197.8 775.6,201.1 789.4,203.3 795.0,204.8 797.8,211.3 803.3,225.2 816.3,242.8 826.5,257.6 837.6,269.6 844.0,274.5 1282.0,274.5 1318.9,274.5 1318.9,199.3 1330.7,204.8 1330.7,274.5 1355.4,274.5 1356.3,203.9 1367.4,205.2 1367.4,274.5 1890.0,274.5" fill="none" stroke="#30b4b0" stroke-width="1.1" stroke-linejoin="miter"/><polyline points="64.5,274.5 674.9,274.6 683.8,280.6 696.2,290.0 711.9,299.4 727.5,306.7 748.3,314.0 769.2,318.6 784.8,321.8 795.2,323.5 800.4,322.3 806.7,319.2 819.2,304.6 833.8,289.0 844.2,277.5 852.5,276.5 1282.0,276.5 1283.0,273.0 1318.9,273.0 1318.9,268.1 1330.7,268.1 1330.7,273.7 1344.3,273.7 1346.0,276.5 1355.4,276.5 1355.4,320.6 1356.3,323.3 1367.4,324.3 1367.4,276.5 1890.0,276.5" fill="none" stroke="#cc30d4" stroke-width="1.1" stroke-linejoin="miter"/><polyline points="64.5,527.5 673.5,527.5 674.9,502.1 675.4,493.2 677.0,490.1 683.8,483.3 691.0,476.0 701.5,468.8 708.8,463.0 718.1,457.3 735.8,449.5 754.6,442.2 770.2,438.0 784.8,435.2 792.1,434.4 800.4,434.4 809.8,442.2 819.2,455.2 833.8,476.0 841.0,486.5 845.2,497.9 852.5,514.6 855.1,527.5 1318.6,527.5 1318.6,440.1 1320.7,438.4 1330.7,432.7 1331.4,527.5 1354.8,527.5 1354.8,436.9 1357.0,434.2 1367.6,433.1 1367.6,527.5 1890.0,527.5" fill="none" stroke="#48dc48" stroke-width="1.1" stroke-linejoin="miter"/><polyline points="64.5,527.5 673.5,527.5 675.4,526.6 685.8,516.7 696.2,509.9 711.9,499.0 727.5,491.7 748.3,483.9 769.2,477.1 790.0,472.9 796.2,472.4 802.5,474.5 807.7,478.1 816.0,489.6 826.5,501.0 836.9,515.6 842.0,521.4 848.3,522.9 852.5,524.5 1281.9,524.5 1295.2,356.5 1318.6,356.5 1318.6,363.0 1331.4,363.0 1331.4,356.5 1342.0,356.5 1343.5,516.8 1345.2,524.3 1354.8,524.3 1354.8,473.1 1356.0,471.4 1367.6,471.4 1367.6,524.3 1890.0,524.5" fill="none" stroke="#1c1cc0" stroke-width="1.5" stroke-linejoin="miter"/><polyline points="1354.8,527.5 1354.8,436.9 1357.0,434.2 1367.6,433.1 1367.6,527.5" fill="none" stroke="#48dc48" stroke-width="1.1" stroke-linejoin="miter"/><g font-family='"Liberation Sans", sans-serif'><text transform="translate(352.88,146) scale(0.9,1)" font-size="14.5" font-weight="bold" fill="#e8202a">I(C1)</text><text transform="translate(957.88,146) scale(0.9,1)" font-size="14.5" font-weight="bold" fill="#2ab8b8">Ig(J1)</text><text transform="translate(1565.83,146) scale(0.9,1)" font-size="14.5" font-weight="bold" fill="#e028e0">Is(J1)</text><text transform="translate(501.61,351) scale(0.9,1)" font-size="14.5" font-weight="bold" fill="#38e838">V(vwl)</text><text transform="translate(1414.91,351) scale(0.9,1)" font-size="14.5" font-weight="bold" fill="#1414d8">V(vbl)</text></g><clipPath id="clip580"><path d="M3,1058 V587 Q3,581 9,581 H1911 Q1917,581 1917,587 V1058 Z"/></clipPath><path d="M2.5,1058.5 V586.5 Q2.5,580.5 8.5,580.5 H1911.5 Q1917.5,580.5 1917.5,586.5 V1058.5 Z" fill="#bcd4ec" stroke="#3c4046" stroke-width="1"/><g clip-path="url(#clip580)"><rect x="3" y="581" width="1914" height="1" fill="#eef3f8" /><rect x="3" y="582" width="1914" height="30" fill="url(#t2)" /><line x1="3.5" y1="582" x2="3.5" y2="1058" stroke="#f4f8fc" stroke-width="1"/><line x1="1916.5" y1="582" x2="1916.5" y2="1058" stroke="#eaf2fa" stroke-width="1"/></g><rect x="11" y="611" width="1897" height="438" fill="#646c74" /><rect x="12" y="612" width="1896" height="437" fill="#c8c7c7" /><path d="M17,619h1v1h-1zM39,619h1v1h-1zM62,619h1v1h-1zM84,619h1v1h-1zM106,619h1v1h-1zM128,619h1v1h-1zM151,619h1v1h-1zM173,619h1v1h-1zM195,619h1v1h-1zM218,619h1v1h-1zM240,619h1v1h-1zM262,619h1v1h-1zM284,619h1v1h-1zM307,619h1v1h-1zM329,619h1v1h-1zM351,619h1v1h-1zM374,619h1v1h-1zM396,619h1v1h-1zM418,619h1v1h-1zM440,619h1v1h-1zM463,619h1v1h-1zM485,619h1v1h-1zM507,619h1v1h-1zM530,619h1v1h-1zM552,619h1v1h-1zM574,619h1v1h-1zM596,619h1v1h-1zM619,619h1v1h-1zM641,619h1v1h-1zM663,619h1v1h-1zM686,619h1v1h-1zM708,619h1v1h-1zM730,619h1v1h-1zM752,619h1v1h-1zM775,619h1v1h-1zM797,619h1v1h-1zM819,619h1v1h-1zM842,619h1v1h-1zM864,619h1v1h-1zM886,619h1v1h-1zM908,619h1v1h-1zM931,619h1v1h-1zM953,619h1v1h-1zM975,619h1v1h-1zM998,619h1v1h-1zM1020,619h1v1h-1zM1042,619h1v1h-1zM1064,619h1v1h-1zM1087,619h1v1h-1zM1109,619h1v1h-1zM1131,619h1v1h-1zM1154,619h1v1h-1zM1176,619h1v1h-1zM1198,619h1v1h-1zM1220,619h1v1h-1zM1243,619h1v1h-1zM1265,619h1v1h-1zM1287,619h1v1h-1zM1310,619h1v1h-1zM1332,619h1v1h-1zM1354,619h1v1h-1zM1376,619h1v1h-1zM1399,619h1v1h-1zM1421,619h1v1h-1zM1443,619h1v1h-1zM1466,619h1v1h-1zM1488,619h1v1h-1zM1510,619h1v1h-1zM1532,619h1v1h-1zM1555,619h1v1h-1zM1577,619h1v1h-1zM1599,619h1v1h-1zM1622,619h1v1h-1zM1644,619h1v1h-1zM1666,619h1v1h-1zM1688,619h1v1h-1zM1711,619h1v1h-1zM1733,619h1v1h-1zM1755,619h1v1h-1zM1778,619h1v1h-1zM1800,619h1v1h-1zM1822,619h1v1h-1zM1844,619h1v1h-1zM1867,619h1v1h-1zM1889,619h1v1h-1zM17,641h1v1h-1zM39,641h1v1h-1zM62,641h1v1h-1zM84,641h1v1h-1zM106,641h1v1h-1zM128,641h1v1h-1zM151,641h1v1h-1zM173,641h1v1h-1zM195,641h1v1h-1zM218,641h1v1h-1zM240,641h1v1h-1zM262,641h1v1h-1zM284,641h1v1h-1zM307,641h1v1h-1zM329,641h1v1h-1zM351,641h1v1h-1zM374,641h1v1h-1zM396,641h1v1h-1zM418,641h1v1h-1zM440,641h1v1h-1zM463,641h1v1h-1zM485,641h1v1h-1zM507,641h1v1h-1zM530,641h1v1h-1zM552,641h1v1h-1zM574,641h1v1h-1zM596,641h1v1h-1zM619,641h1v1h-1zM641,641h1v1h-1zM663,641h1v1h-1zM686,641h1v1h-1zM708,641h1v1h-1zM730,641h1v1h-1zM752,641h1v1h-1zM775,641h1v1h-1zM797,641h1v1h-1zM819,641h1v1h-1zM842,641h1v1h-1zM864,641h1v1h-1zM886,641h1v1h-1zM908,641h1v1h-1zM931,641h1v1h-1zM953,641h1v1h-1zM975,641h1v1h-1zM998,641h1v1h-1zM1020,641h1v1h-1zM1042,641h1v1h-1zM1064,641h1v1h-1zM1087,641h1v1h-1zM1109,641h1v1h-1zM1131,641h1v1h-1zM1154,641h1v1h-1zM1176,641h1v1h-1zM1198,641h1v1h-1zM1220,641h1v1h-1zM1243,641h1v1h-1zM1265,641h1v1h-1zM1287,641h1v1h-1zM1310,641h1v1h-1zM1332,641h1v1h-1zM1354,641h1v1h-1zM1376,641h1v1h-1zM1399,641h1v1h-1zM1421,641h1v1h-1zM1443,641h1v1h-1zM1466,641h1v1h-1zM1488,641h1v1h-1zM1510,641h1v1h-1zM1532,641h1v1h-1zM1555,641h1v1h-1zM1577,641h1v1h-1zM1599,641h1v1h-1zM1622,641h1v1h-1zM1644,641h1v1h-1zM1666,641h1v1h-1zM1688,641h1v1h-1zM1711,641h1v1h-1zM1733,641h1v1h-1zM1755,641h1v1h-1zM1778,641h1v1h-1zM1800,641h1v1h-1zM1822,641h1v1h-1zM1844,641h1v1h-1zM1867,641h1v1h-1zM1889,641h1v1h-1zM17,664h1v1h-1zM39,664h1v1h-1zM62,664h1v1h-1zM84,664h1v1h-1zM106,664h1v1h-1zM128,664h1v1h-1zM151,664h1v1h-1zM173,664h1v1h-1zM195,664h1v1h-1zM218,664h1v1h-1zM240,664h1v1h-1zM262,664h1v1h-1zM284,664h1v1h-1zM307,664h1v1h-1zM329,664h1v1h-1zM351,664h1v1h-1zM374,664h1v1h-1zM396,664h1v1h-1zM418,664h1v1h-1zM440,664h1v1h-1zM463,664h1v1h-1zM485,664h1v1h-1zM507,664h1v1h-1zM530,664h1v1h-1zM552,664h1v1h-1zM574,664h1v1h-1zM596,664h1v1h-1zM619,664h1v1h-1zM641,664h1v1h-1zM663,664h1v1h-1zM686,664h1v1h-1zM708,664h1v1h-1zM730,664h1v1h-1zM752,664h1v1h-1zM775,664h1v1h-1zM797,664h1v1h-1zM819,664h1v1h-1zM842,664h1v1h-1zM864,664h1v1h-1zM886,664h1v1h-1zM908,664h1v1h-1zM931,664h1v1h-1zM953,664h1v1h-1zM975,664h1v1h-1zM998,664h1v1h-1zM1020,664h1v1h-1zM1042,664h1v1h-1zM1064,664h1v1h-1zM1087,664h1v1h-1zM1109,664h1v1h-1zM1131,664h1v1h-1zM1154,664h1v1h-1zM1176,664h1v1h-1zM1198,664h1v1h-1zM1220,664h1v1h-1zM1243,664h1v1h-1zM1265,664h1v1h-1zM1287,664h1v1h-1zM1310,664h1v1h-1zM1332,664h1v1h-1zM1354,664h1v1h-1zM1376,664h1v1h-1zM1399,664h1v1h-1zM1421,664h1v1h-1zM1443,664h1v1h-1zM1466,664h1v1h-1zM1488,664h1v1h-1zM1510,664h1v1h-1zM1532,664h1v1h-1zM1555,664h1v1h-1zM1577,664h1v1h-1zM1599,664h1v1h-1zM1622,664h1v1h-1zM1644,664h1v1h-1zM1666,664h1v1h-1zM1688,664h1v1h-1zM1711,664h1v1h-1zM1733,664h1v1h-1zM1755,664h1v1h-1zM1778,664h1v1h-1zM1800,664h1v1h-1zM1822,664h1v1h-1zM1844,664h1v1h-1zM1867,664h1v1h-1zM1889,664h1v1h-1zM17,686h1v1h-1zM39,686h1v1h-1zM62,686h1v1h-1zM84,686h1v1h-1zM106,686h1v1h-1zM128,686h1v1h-1zM151,686h1v1h-1zM173,686h1v1h-1zM195,686h1v1h-1zM218,686h1v1h-1zM240,686h1v1h-1zM262,686h1v1h-1zM284,686h1v1h-1zM307,686h1v1h-1zM329,686h1v1h-1zM351,686h1v1h-1zM374,686h1v1h-1zM396,686h1v1h-1zM418,686h1v1h-1zM440,686h1v1h-1zM463,686h1v1h-1zM485,686h1v1h-1zM507,686h1v1h-1zM530,686h1v1h-1zM552,686h1v1h-1zM574,686h1v1h-1zM596,686h1v1h-1zM619,686h1v1h-1zM641,686h1v1h-1zM663,686h1v1h-1zM686,686h1v1h-1zM708,686h1v1h-1zM730,686h1v1h-1zM752,686h1v1h-1zM775,686h1v1h-1zM797,686h1v1h-1zM819,686h1v1h-1zM842,686h1v1h-1zM864,686h1v1h-1zM886,686h1v1h-1zM908,686h1v1h-1zM931,686h1v1h-1zM953,686h1v1h-1zM975,686h1v1h-1zM998,686h1v1h-1zM1020,686h1v1h-1zM1042,686h1v1h-1zM1064,686h1v1h-1zM1087,686h1v1h-1zM1109,686h1v1h-1zM1131,686h1v1h-1zM1154,686h1v1h-1zM1176,686h1v1h-1zM1198,686h1v1h-1zM1220,686h1v1h-1zM1243,686h1v1h-1zM1265,686h1v1h-1zM1287,686h1v1h-1zM1310,686h1v1h-1zM1332,686h1v1h-1zM1354,686h1v1h-1zM1376,686h1v1h-1zM1399,686h1v1h-1zM1421,686h1v1h-1zM1443,686h1v1h-1zM1466,686h1v1h-1zM1488,686h1v1h-1zM1510,686h1v1h-1zM1532,686h1v1h-1zM1555,686h1v1h-1zM1577,686h1v1h-1zM1599,686h1v1h-1zM1622,686h1v1h-1zM1644,686h1v1h-1zM1666,686h1v1h-1zM1688,686h1v1h-1zM1711,686h1v1h-1zM1733,686h1v1h-1zM1755,686h1v1h-1zM1778,686h1v1h-1zM1800,686h1v1h-1zM1822,686h1v1h-1zM1844,686h1v1h-1zM1867,686h1v1h-1zM1889,686h1v1h-1zM17,708h1v1h-1zM39,708h1v1h-1zM62,708h1v1h-1zM84,708h1v1h-1zM106,708h1v1h-1zM128,708h1v1h-1zM151,708h1v1h-1zM173,708h1v1h-1zM195,708h1v1h-1zM218,708h1v1h-1zM240,708h1v1h-1zM262,708h1v1h-1zM284,708h1v1h-1zM307,708h1v1h-1zM329,708h1v1h-1zM351,708h1v1h-1zM374,708h1v1h-1zM396,708h1v1h-1zM418,708h1v1h-1zM440,708h1v1h-1zM463,708h1v1h-1zM485,708h1v1h-1zM507,708h1v1h-1zM530,708h1v1h-1zM552,708h1v1h-1zM574,708h1v1h-1zM596,708h1v1h-1zM619,708h1v1h-1zM641,708h1v1h-1zM663,708h1v1h-1zM686,708h1v1h-1zM708,708h1v1h-1zM730,708h1v1h-1zM752,708h1v1h-1zM775,708h1v1h-1zM797,708h1v1h-1zM819,708h1v1h-1zM842,708h1v1h-1zM864,708h1v1h-1zM886,708h1v1h-1zM908,708h1v1h-1zM931,708h1v1h-1zM953,708h1v1h-1zM975,708h1v1h-1zM998,708h1v1h-1zM1020,708h1v1h-1zM1042,708h1v1h-1zM1064,708h1v1h-1zM1087,708h1v1h-1zM1109,708h1v1h-1zM1131,708h1v1h-1zM1154,708h1v1h-1zM1176,708h1v1h-1zM1198,708h1v1h-1zM1220,708h1v1h-1zM1243,708h1v1h-1zM1265,708h1v1h-1zM1287,708h1v1h-1zM1310,708h1v1h-1zM1332,708h1v1h-1zM1354,708h1v1h-1zM1376,708h1v1h-1zM1399,708h1v1h-1zM1421,708h1v1h-1zM1443,708h1v1h-1zM1466,708h1v1h-1zM1488,708h1v1h-1zM1510,708h1v1h-1zM1532,708h1v1h-1zM1555,708h1v1h-1zM1577,708h1v1h-1zM1599,708h1v1h-1zM1622,708h1v1h-1zM1644,708h1v1h-1zM1666,708h1v1h-1zM1688,708h1v1h-1zM1711,708h1v1h-1zM1733,708h1v1h-1zM1755,708h1v1h-1zM1778,708h1v1h-1zM1800,708h1v1h-1zM1822,708h1v1h-1zM1844,708h1v1h-1zM1867,708h1v1h-1zM1889,708h1v1h-1zM17,730h1v1h-1zM39,730h1v1h-1zM62,730h1v1h-1zM84,730h1v1h-1zM106,730h1v1h-1zM128,730h1v1h-1zM151,730h1v1h-1zM173,730h1v1h-1zM195,730h1v1h-1zM218,730h1v1h-1zM240,730h1v1h-1zM262,730h1v1h-1zM284,730h1v1h-1zM307,730h1v1h-1zM329,730h1v1h-1zM351,730h1v1h-1zM374,730h1v1h-1zM396,730h1v1h-1zM418,730h1v1h-1zM440,730h1v1h-1zM463,730h1v1h-1zM485,730h1v1h-1zM507,730h1v1h-1zM530,730h1v1h-1zM552,730h1v1h-1zM574,730h1v1h-1zM596,730h1v1h-1zM619,730h1v1h-1zM641,730h1v1h-1zM663,730h1v1h-1zM686,730h1v1h-1zM708,730h1v1h-1zM730,730h1v1h-1zM752,730h1v1h-1zM775,730h1v1h-1zM797,730h1v1h-1zM819,730h1v1h-1zM842,730h1v1h-1zM864,730h1v1h-1zM886,730h1v1h-1zM908,730h1v1h-1zM931,730h1v1h-1zM953,730h1v1h-1zM975,730h1v1h-1zM998,730h1v1h-1zM1020,730h1v1h-1zM1042,730h1v1h-1zM1064,730h1v1h-1zM1087,730h1v1h-1zM1109,730h1v1h-1zM1131,730h1v1h-1zM1154,730h1v1h-1zM1176,730h1v1h-1zM1198,730h1v1h-1zM1220,730h1v1h-1zM1243,730h1v1h-1zM1265,730h1v1h-1zM1287,730h1v1h-1zM1310,730h1v1h-1zM1332,730h1v1h-1zM1354,730h1v1h-1zM1376,730h1v1h-1zM1399,730h1v1h-1zM1421,730h1v1h-1zM1443,730h1v1h-1zM1466,730h1v1h-1zM1488,730h1v1h-1zM1510,730h1v1h-1zM1532,730h1v1h-1zM1555,730h1v1h-1zM1577,730h1v1h-1zM1599,730h1v1h-1zM1622,730h1v1h-1zM1644,730h1v1h-1zM1666,730h1v1h-1zM1688,730h1v1h-1zM1711,730h1v1h-1zM1733,730h1v1h-1zM1755,730h1v1h-1zM1778,730h1v1h-1zM1800,730h1v1h-1zM1822,730h1v1h-1zM1844,730h1v1h-1zM1867,730h1v1h-1zM1889,730h1v1h-1zM17,753h1v1h-1zM39,753h1v1h-1zM62,753h1v1h-1zM84,753h1v1h-1zM106,753h1v1h-1zM128,753h1v1h-1zM151,753h1v1h-1zM173,753h1v1h-1zM195,753h1v1h-1zM218,753h1v1h-1zM240,753h1v1h-1zM262,753h1v1h-1zM284,753h1v1h-1zM307,753h1v1h-1zM329,753h1v1h-1zM351,753h1v1h-1zM374,753h1v1h-1zM396,753h1v1h-1zM418,753h1v1h-1zM440,753h1v1h-1zM463,753h1v1h-1zM485,753h1v1h-1zM507,753h1v1h-1zM530,753h1v1h-1zM552,753h1v1h-1zM574,753h1v1h-1zM596,753h1v1h-1zM619,753h1v1h-1zM641,753h1v1h-1zM663,753h1v1h-1zM686,753h1v1h-1zM708,753h1v1h-1zM730,753h1v1h-1zM752,753h1v1h-1zM775,753h1v1h-1zM797,753h1v1h-1zM819,753h1v1h-1zM842,753h1v1h-1zM864,753h1v1h-1zM886,753h1v1h-1zM908,753h1v1h-1zM931,753h1v1h-1zM953,753h1v1h-1zM975,753h1v1h-1zM998,753h1v1h-1zM1020,753h1v1h-1zM1042,753h1v1h-1zM1064,753h1v1h-1zM1087,753h1v1h-1zM1109,753h1v1h-1zM1131,753h1v1h-1zM1154,753h1v1h-1zM1176,753h1v1h-1zM1198,753h1v1h-1zM1220,753h1v1h-1zM1243,753h1v1h-1zM1265,753h1v1h-1zM1287,753h1v1h-1zM1310,753h1v1h-1zM1332,753h1v1h-1zM1354,753h1v1h-1zM1376,753h1v1h-1zM1399,753h1v1h-1zM1421,753h1v1h-1zM1443,753h1v1h-1zM1466,753h1v1h-1zM1488,753h1v1h-1zM1510,753h1v1h-1zM1532,753h1v1h-1zM1555,753h1v1h-1zM1577,753h1v1h-1zM1599,753h1v1h-1zM1622,753h1v1h-1zM1644,753h1v1h-1zM1666,753h1v1h-1zM1688,753h1v1h-1zM1711,753h1v1h-1zM1733,753h1v1h-1zM1755,753h1v1h-1zM1778,753h1v1h-1zM1800,753h1v1h-1zM1822,753h1v1h-1zM1844,753h1v1h-1zM1867,753h1v1h-1zM1889,753h1v1h-1zM17,775h1v1h-1zM39,775h1v1h-1zM62,775h1v1h-1zM84,775h1v1h-1zM106,775h1v1h-1zM128,775h1v1h-1zM151,775h1v1h-1zM173,775h1v1h-1zM195,775h1v1h-1zM218,775h1v1h-1zM240,775h1v1h-1zM262,775h1v1h-1zM284,775h1v1h-1zM307,775h1v1h-1zM329,775h1v1h-1zM351,775h1v1h-1zM374,775h1v1h-1zM396,775h1v1h-1zM418,775h1v1h-1zM440,775h1v1h-1zM463,775h1v1h-1zM485,775h1v1h-1zM507,775h1v1h-1zM530,775h1v1h-1zM552,775h1v1h-1zM574,775h1v1h-1zM596,775h1v1h-1zM619,775h1v1h-1zM641,775h1v1h-1zM663,775h1v1h-1zM686,775h1v1h-1zM708,775h1v1h-1zM730,775h1v1h-1zM752,775h1v1h-1zM775,775h1v1h-1zM797,775h1v1h-1zM819,775h1v1h-1zM842,775h1v1h-1zM864,775h1v1h-1zM886,775h1v1h-1zM908,775h1v1h-1zM931,775h1v1h-1zM953,775h1v1h-1zM975,775h1v1h-1zM998,775h1v1h-1zM1020,775h1v1h-1zM1042,775h1v1h-1zM1064,775h1v1h-1zM1087,775h1v1h-1zM1109,775h1v1h-1zM1131,775h1v1h-1zM1154,775h1v1h-1zM1176,775h1v1h-1zM1198,775h1v1h-1zM1220,775h1v1h-1zM1243,775h1v1h-1zM1265,775h1v1h-1zM1287,775h1v1h-1zM1310,775h1v1h-1zM1332,775h1v1h-1zM1354,775h1v1h-1zM1376,775h1v1h-1zM1399,775h1v1h-1zM1421,775h1v1h-1zM1443,775h1v1h-1zM1466,775h1v1h-1zM1488,775h1v1h-1zM1510,775h1v1h-1zM1532,775h1v1h-1zM1555,775h1v1h-1zM1577,775h1v1h-1zM1599,775h1v1h-1zM1622,775h1v1h-1zM1644,775h1v1h-1zM1666,775h1v1h-1zM1688,775h1v1h-1zM1711,775h1v1h-1zM1733,775h1v1h-1zM1755,775h1v1h-1zM1778,775h1v1h-1zM1800,775h1v1h-1zM1822,775h1v1h-1zM1844,775h1v1h-1zM1867,775h1v1h-1zM1889,775h1v1h-1zM17,797h1v1h-1zM39,797h1v1h-1zM62,797h1v1h-1zM84,797h1v1h-1zM106,797h1v1h-1zM128,797h1v1h-1zM151,797h1v1h-1zM173,797h1v1h-1zM195,797h1v1h-1zM218,797h1v1h-1zM240,797h1v1h-1zM262,797h1v1h-1zM284,797h1v1h-1zM307,797h1v1h-1zM329,797h1v1h-1zM351,797h1v1h-1zM374,797h1v1h-1zM396,797h1v1h-1zM418,797h1v1h-1zM440,797h1v1h-1zM463,797h1v1h-1zM485,797h1v1h-1zM507,797h1v1h-1zM530,797h1v1h-1zM552,797h1v1h-1zM574,797h1v1h-1zM596,797h1v1h-1zM619,797h1v1h-1zM641,797h1v1h-1zM663,797h1v1h-1zM686,797h1v1h-1zM708,797h1v1h-1zM730,797h1v1h-1zM752,797h1v1h-1zM775,797h1v1h-1zM797,797h1v1h-1zM819,797h1v1h-1zM842,797h1v1h-1zM864,797h1v1h-1zM886,797h1v1h-1zM908,797h1v1h-1zM931,797h1v1h-1zM953,797h1v1h-1zM975,797h1v1h-1zM998,797h1v1h-1zM1020,797h1v1h-1zM1042,797h1v1h-1zM1064,797h1v1h-1zM1087,797h1v1h-1zM1109,797h1v1h-1zM1131,797h1v1h-1zM1154,797h1v1h-1zM1176,797h1v1h-1zM1198,797h1v1h-1zM1220,797h1v1h-1zM1243,797h1v1h-1zM1265,797h1v1h-1zM1287,797h1v1h-1zM1310,797h1v1h-1zM1332,797h1v1h-1zM1354,797h1v1h-1zM1376,797h1v1h-1zM1399,797h1v1h-1zM1421,797h1v1h-1zM1443,797h1v1h-1zM1466,797h1v1h-1zM1488,797h1v1h-1zM1510,797h1v1h-1zM1532,797h1v1h-1zM1555,797h1v1h-1zM1577,797h1v1h-1zM1599,797h1v1h-1zM1622,797h1v1h-1zM1644,797h1v1h-1zM1666,797h1v1h-1zM1688,797h1v1h-1zM1711,797h1v1h-1zM1733,797h1v1h-1zM1755,797h1v1h-1zM1778,797h1v1h-1zM1800,797h1v1h-1zM1822,797h1v1h-1zM1844,797h1v1h-1zM1867,797h1v1h-1zM1889,797h1v1h-1zM17,819h1v1h-1zM39,819h1v1h-1zM62,819h1v1h-1zM84,819h1v1h-1zM106,819h1v1h-1zM128,819h1v1h-1zM151,819h1v1h-1zM173,819h1v1h-1zM195,819h1v1h-1zM218,819h1v1h-1zM240,819h1v1h-1zM262,819h1v1h-1zM284,819h1v1h-1zM307,819h1v1h-1zM329,819h1v1h-1zM351,819h1v1h-1zM374,819h1v1h-1zM396,819h1v1h-1zM418,819h1v1h-1zM440,819h1v1h-1zM463,819h1v1h-1zM485,819h1v1h-1zM507,819h1v1h-1zM530,819h1v1h-1zM552,819h1v1h-1zM574,819h1v1h-1zM596,819h1v1h-1zM619,819h1v1h-1zM641,819h1v1h-1zM663,819h1v1h-1zM686,819h1v1h-1zM708,819h1v1h-1zM730,819h1v1h-1zM752,819h1v1h-1zM775,819h1v1h-1zM797,819h1v1h-1zM819,819h1v1h-1zM842,819h1v1h-1zM864,819h1v1h-1zM886,819h1v1h-1zM908,819h1v1h-1zM931,819h1v1h-1zM953,819h1v1h-1zM975,819h1v1h-1zM998,819h1v1h-1zM1020,819h1v1h-1zM1042,819h1v1h-1zM1064,819h1v1h-1zM1087,819h1v1h-1zM1109,819h1v1h-1zM1131,819h1v1h-1zM1154,819h1v1h-1zM1176,819h1v1h-1zM1198,819h1v1h-1zM1220,819h1v1h-1zM1243,819h1v1h-1zM1265,819h1v1h-1zM1287,819h1v1h-1zM1310,819h1v1h-1zM1332,819h1v1h-1zM1354,819h1v1h-1zM1376,819h1v1h-1zM1399,819h1v1h-1zM1421,819h1v1h-1zM1443,819h1v1h-1zM1466,819h1v1h-1zM1488,819h1v1h-1zM1510,819h1v1h-1zM1532,819h1v1h-1zM1555,819h1v1h-1zM1577,819h1v1h-1zM1599,819h1v1h-1zM1622,819h1v1h-1zM1644,819h1v1h-1zM1666,819h1v1h-1zM1688,819h1v1h-1zM1711,819h1v1h-1zM1733,819h1v1h-1zM1755,819h1v1h-1zM1778,819h1v1h-1zM1800,819h1v1h-1zM1822,819h1v1h-1zM1844,819h1v1h-1zM1867,819h1v1h-1zM1889,819h1v1h-1zM17,842h1v1h-1zM39,842h1v1h-1zM62,842h1v1h-1zM84,842h1v1h-1zM106,842h1v1h-1zM128,842h1v1h-1zM151,842h1v1h-1zM173,842h1v1h-1zM195,842h1v1h-1zM218,842h1v1h-1zM240,842h1v1h-1zM262,842h1v1h-1zM284,842h1v1h-1zM307,842h1v1h-1zM329,842h1v1h-1zM351,842h1v1h-1zM374,842h1v1h-1zM396,842h1v1h-1zM418,842h1v1h-1zM440,842h1v1h-1zM463,842h1v1h-1zM485,842h1v1h-1zM507,842h1v1h-1zM530,842h1v1h-1zM552,842h1v1h-1zM574,842h1v1h-1zM596,842h1v1h-1zM619,842h1v1h-1zM641,842h1v1h-1zM663,842h1v1h-1zM686,842h1v1h-1zM708,842h1v1h-1zM730,842h1v1h-1zM752,842h1v1h-1zM775,842h1v1h-1zM797,842h1v1h-1zM819,842h1v1h-1zM842,842h1v1h-1zM864,842h1v1h-1zM886,842h1v1h-1zM908,842h1v1h-1zM931,842h1v1h-1zM953,842h1v1h-1zM975,842h1v1h-1zM998,842h1v1h-1zM1020,842h1v1h-1zM1042,842h1v1h-1zM1064,842h1v1h-1zM1087,842h1v1h-1zM1109,842h1v1h-1zM1131,842h1v1h-1zM1154,842h1v1h-1zM1176,842h1v1h-1zM1198,842h1v1h-1zM1220,842h1v1h-1zM1243,842h1v1h-1zM1265,842h1v1h-1zM1287,842h1v1h-1zM1310,842h1v1h-1zM1332,842h1v1h-1zM1354,842h1v1h-1zM1376,842h1v1h-1zM1399,842h1v1h-1zM1421,842h1v1h-1zM1443,842h1v1h-1zM1466,842h1v1h-1zM1488,842h1v1h-1zM1510,842h1v1h-1zM1532,842h1v1h-1zM1555,842h1v1h-1zM1577,842h1v1h-1zM1599,842h1v1h-1zM1622,842h1v1h-1zM1644,842h1v1h-1zM1666,842h1v1h-1zM1688,842h1v1h-1zM1711,842h1v1h-1zM1733,842h1v1h-1zM1755,842h1v1h-1zM1778,842h1v1h-1zM1800,842h1v1h-1zM1822,842h1v1h-1zM1844,842h1v1h-1zM1867,842h1v1h-1zM1889,842h1v1h-1zM17,864h1v1h-1zM39,864h1v1h-1zM62,864h1v1h-1zM84,864h1v1h-1zM106,864h1v1h-1zM128,864h1v1h-1zM151,864h1v1h-1zM173,864h1v1h-1zM195,864h1v1h-1zM218,864h1v1h-1zM240,864h1v1h-1zM262,864h1v1h-1zM284,864h1v1h-1zM307,864h1v1h-1zM329,864h1v1h-1zM351,864h1v1h-1zM374,864h1v1h-1zM396,864h1v1h-1zM418,864h1v1h-1zM440,864h1v1h-1zM463,864h1v1h-1zM485,864h1v1h-1zM507,864h1v1h-1zM530,864h1v1h-1zM552,864h1v1h-1zM574,864h1v1h-1zM596,864h1v1h-1zM619,864h1v1h-1zM641,864h1v1h-1zM663,864h1v1h-1zM686,864h1v1h-1zM708,864h1v1h-1zM730,864h1v1h-1zM752,864h1v1h-1zM775,864h1v1h-1zM797,864h1v1h-1zM819,864h1v1h-1zM842,864h1v1h-1zM864,864h1v1h-1zM886,864h1v1h-1zM908,864h1v1h-1zM931,864h1v1h-1zM953,864h1v1h-1zM975,864h1v1h-1zM998,864h1v1h-1zM1020,864h1v1h-1zM1042,864h1v1h-1zM1064,864h1v1h-1zM1087,864h1v1h-1zM1109,864h1v1h-1zM1131,864h1v1h-1zM1154,864h1v1h-1zM1176,864h1v1h-1zM1198,864h1v1h-1zM1220,864h1v1h-1zM1243,864h1v1h-1zM1265,864h1v1h-1zM1287,864h1v1h-1zM1310,864h1v1h-1zM1332,864h1v1h-1zM1354,864h1v1h-1zM1376,864h1v1h-1zM1399,864h1v1h-1zM1421,864h1v1h-1zM1443,864h1v1h-1zM1466,864h1v1h-1zM1488,864h1v1h-1zM1510,864h1v1h-1zM1532,864h1v1h-1zM1555,864h1v1h-1zM1577,864h1v1h-1zM1599,864h1v1h-1zM1622,864h1v1h-1zM1644,864h1v1h-1zM1666,864h1v1h-1zM1688,864h1v1h-1zM1711,864h1v1h-1zM1733,864h1v1h-1zM1755,864h1v1h-1zM1778,864h1v1h-1zM1800,864h1v1h-1zM1822,864h1v1h-1zM1844,864h1v1h-1zM1867,864h1v1h-1zM1889,864h1v1h-1zM17,886h1v1h-1zM39,886h1v1h-1zM62,886h1v1h-1zM84,886h1v1h-1zM106,886h1v1h-1zM128,886h1v1h-1zM151,886h1v1h-1zM173,886h1v1h-1zM195,886h1v1h-1zM218,886h1v1h-1zM240,886h1v1h-1zM262,886h1v1h-1zM284,886h1v1h-1zM307,886h1v1h-1zM329,886h1v1h-1zM351,886h1v1h-1zM374,886h1v1h-1zM396,886h1v1h-1zM418,886h1v1h-1zM440,886h1v1h-1zM463,886h1v1h-1zM485,886h1v1h-1zM507,886h1v1h-1zM530,886h1v1h-1zM552,886h1v1h-1zM574,886h1v1h-1zM596,886h1v1h-1zM619,886h1v1h-1zM641,886h1v1h-1zM663,886h1v1h-1zM686,886h1v1h-1zM708,886h1v1h-1zM730,886h1v1h-1zM752,886h1v1h-1zM775,886h1v1h-1zM797,886h1v1h-1zM819,886h1v1h-1zM842,886h1v1h-1zM864,886h1v1h-1zM886,886h1v1h-1zM908,886h1v1h-1zM931,886h1v1h-1zM953,886h1v1h-1zM975,886h1v1h-1zM998,886h1v1h-1zM1020,886h1v1h-1zM1042,886h1v1h-1zM1064,886h1v1h-1zM1087,886h1v1h-1zM1109,886h1v1h-1zM1131,886h1v1h-1zM1154,886h1v1h-1zM1176,886h1v1h-1zM1198,886h1v1h-1zM1220,886h1v1h-1zM1243,886h1v1h-1zM1265,886h1v1h-1zM1287,886h1v1h-1zM1310,886h1v1h-1zM1332,886h1v1h-1zM1354,886h1v1h-1zM1376,886h1v1h-1zM1399,886h1v1h-1zM1421,886h1v1h-1zM1443,886h1v1h-1zM1466,886h1v1h-1zM1488,886h1v1h-1zM1510,886h1v1h-1zM1532,886h1v1h-1zM1555,886h1v1h-1zM1577,886h1v1h-1zM1599,886h1v1h-1zM1622,886h1v1h-1zM1644,886h1v1h-1zM1666,886h1v1h-1zM1688,886h1v1h-1zM1711,886h1v1h-1zM1733,886h1v1h-1zM1755,886h1v1h-1zM1778,886h1v1h-1zM1800,886h1v1h-1zM1822,886h1v1h-1zM1844,886h1v1h-1zM1867,886h1v1h-1zM1889,886h1v1h-1zM17,908h1v1h-1zM39,908h1v1h-1zM62,908h1v1h-1zM84,908h1v1h-1zM106,908h1v1h-1zM128,908h1v1h-1zM151,908h1v1h-1zM173,908h1v1h-1zM195,908h1v1h-1zM218,908h1v1h-1zM240,908h1v1h-1zM262,908h1v1h-1zM284,908h1v1h-1zM307,908h1v1h-1zM329,908h1v1h-1zM351,908h1v1h-1zM374,908h1v1h-1zM396,908h1v1h-1zM418,908h1v1h-1zM440,908h1v1h-1zM463,908h1v1h-1zM485,908h1v1h-1zM507,908h1v1h-1zM530,908h1v1h-1zM552,908h1v1h-1zM574,908h1v1h-1zM596,908h1v1h-1zM619,908h1v1h-1zM641,908h1v1h-1zM663,908h1v1h-1zM686,908h1v1h-1zM708,908h1v1h-1zM730,908h1v1h-1zM752,908h1v1h-1zM775,908h1v1h-1zM797,908h1v1h-1zM819,908h1v1h-1zM842,908h1v1h-1zM864,908h1v1h-1zM886,908h1v1h-1zM908,908h1v1h-1zM931,908h1v1h-1zM953,908h1v1h-1zM975,908h1v1h-1zM998,908h1v1h-1zM1020,908h1v1h-1zM1042,908h1v1h-1zM1064,908h1v1h-1zM1087,908h1v1h-1zM1109,908h1v1h-1zM1131,908h1v1h-1zM1154,908h1v1h-1zM1176,908h1v1h-1zM1198,908h1v1h-1zM1220,908h1v1h-1zM1243,908h1v1h-1zM1265,908h1v1h-1zM1287,908h1v1h-1zM1310,908h1v1h-1zM1332,908h1v1h-1zM1354,908h1v1h-1zM1376,908h1v1h-1zM1399,908h1v1h-1zM1421,908h1v1h-1zM1443,908h1v1h-1zM1466,908h1v1h-1zM1488,908h1v1h-1zM1510,908h1v1h-1zM1532,908h1v1h-1zM1555,908h1v1h-1zM1577,908h1v1h-1zM1599,908h1v1h-1zM1622,908h1v1h-1zM1644,908h1v1h-1zM1666,908h1v1h-1zM1688,908h1v1h-1zM1711,908h1v1h-1zM1733,908h1v1h-1zM1755,908h1v1h-1zM1778,908h1v1h-1zM1800,908h1v1h-1zM1822,908h1v1h-1zM1844,908h1v1h-1zM1867,908h1v1h-1zM1889,908h1v1h-1zM17,931h1v1h-1zM39,931h1v1h-1zM62,931h1v1h-1zM84,931h1v1h-1zM106,931h1v1h-1zM128,931h1v1h-1zM151,931h1v1h-1zM173,931h1v1h-1zM195,931h1v1h-1zM218,931h1v1h-1zM240,931h1v1h-1zM262,931h1v1h-1zM284,931h1v1h-1zM307,931h1v1h-1zM329,931h1v1h-1zM351,931h1v1h-1zM374,931h1v1h-1zM396,931h1v1h-1zM418,931h1v1h-1zM440,931h1v1h-1zM463,931h1v1h-1zM485,931h1v1h-1zM507,931h1v1h-1zM530,931h1v1h-1zM552,931h1v1h-1zM574,931h1v1h-1zM596,931h1v1h-1zM619,931h1v1h-1zM641,931h1v1h-1zM663,931h1v1h-1zM686,931h1v1h-1zM708,931h1v1h-1zM730,931h1v1h-1zM752,931h1v1h-1zM775,931h1v1h-1zM797,931h1v1h-1zM819,931h1v1h-1zM842,931h1v1h-1zM864,931h1v1h-1zM886,931h1v1h-1zM908,931h1v1h-1zM931,931h1v1h-1zM953,931h1v1h-1zM975,931h1v1h-1zM998,931h1v1h-1zM1020,931h1v1h-1zM1042,931h1v1h-1zM1064,931h1v1h-1zM1087,931h1v1h-1zM1109,931h1v1h-1zM1131,931h1v1h-1zM1154,931h1v1h-1zM1176,931h1v1h-1zM1198,931h1v1h-1zM1220,931h1v1h-1zM1243,931h1v1h-1zM1265,931h1v1h-1zM1287,931h1v1h-1zM1310,931h1v1h-1zM1332,931h1v1h-1zM1354,931h1v1h-1zM1376,931h1v1h-1zM1399,931h1v1h-1zM1421,931h1v1h-1zM1443,931h1v1h-1zM1466,931h1v1h-1zM1488,931h1v1h-1zM1510,931h1v1h-1zM1532,931h1v1h-1zM1555,931h1v1h-1zM1577,931h1v1h-1zM1599,931h1v1h-1zM1622,931h1v1h-1zM1644,931h1v1h-1zM1666,931h1v1h-1zM1688,931h1v1h-1zM1711,931h1v1h-1zM1733,931h1v1h-1zM1755,931h1v1h-1zM1778,931h1v1h-1zM1800,931h1v1h-1zM1822,931h1v1h-1zM1844,931h1v1h-1zM1867,931h1v1h-1zM1889,931h1v1h-1zM17,953h1v1h-1zM39,953h1v1h-1zM62,953h1v1h-1zM84,953h1v1h-1zM106,953h1v1h-1zM128,953h1v1h-1zM151,953h1v1h-1zM173,953h1v1h-1zM195,953h1v1h-1zM218,953h1v1h-1zM240,953h1v1h-1zM262,953h1v1h-1zM284,953h1v1h-1zM307,953h1v1h-1zM329,953h1v1h-1zM351,953h1v1h-1zM374,953h1v1h-1zM396,953h1v1h-1zM418,953h1v1h-1zM440,953h1v1h-1zM463,953h1v1h-1zM485,953h1v1h-1zM507,953h1v1h-1zM530,953h1v1h-1zM552,953h1v1h-1zM574,953h1v1h-1zM596,953h1v1h-1zM619,953h1v1h-1zM641,953h1v1h-1zM663,953h1v1h-1zM686,953h1v1h-1zM708,953h1v1h-1zM730,953h1v1h-1zM752,953h1v1h-1zM775,953h1v1h-1zM797,953h1v1h-1zM819,953h1v1h-1zM842,953h1v1h-1zM864,953h1v1h-1zM886,953h1v1h-1zM908,953h1v1h-1zM931,953h1v1h-1zM953,953h1v1h-1zM975,953h1v1h-1zM998,953h1v1h-1zM1020,953h1v1h-1zM1042,953h1v1h-1zM1064,953h1v1h-1zM1087,953h1v1h-1zM1109,953h1v1h-1zM1131,953h1v1h-1zM1154,953h1v1h-1zM1176,953h1v1h-1zM1198,953h1v1h-1zM1220,953h1v1h-1zM1243,953h1v1h-1zM1265,953h1v1h-1zM1287,953h1v1h-1zM1310,953h1v1h-1zM1332,953h1v1h-1zM1354,953h1v1h-1zM1376,953h1v1h-1zM1399,953h1v1h-1zM1421,953h1v1h-1zM1443,953h1v1h-1zM1466,953h1v1h-1zM1488,953h1v1h-1zM1510,953h1v1h-1zM1532,953h1v1h-1zM1555,953h1v1h-1zM1577,953h1v1h-1zM1599,953h1v1h-1zM1622,953h1v1h-1zM1644,953h1v1h-1zM1666,953h1v1h-1zM1688,953h1v1h-1zM1711,953h1v1h-1zM1733,953h1v1h-1zM1755,953h1v1h-1zM1778,953h1v1h-1zM1800,953h1v1h-1zM1822,953h1v1h-1zM1844,953h1v1h-1zM1867,953h1v1h-1zM1889,953h1v1h-1zM17,975h1v1h-1zM39,975h1v1h-1zM62,975h1v1h-1zM84,975h1v1h-1zM106,975h1v1h-1zM128,975h1v1h-1zM151,975h1v1h-1zM173,975h1v1h-1zM195,975h1v1h-1zM218,975h1v1h-1zM240,975h1v1h-1zM262,975h1v1h-1zM284,975h1v1h-1zM307,975h1v1h-1zM329,975h1v1h-1zM351,975h1v1h-1zM374,975h1v1h-1zM396,975h1v1h-1zM418,975h1v1h-1zM440,975h1v1h-1zM463,975h1v1h-1zM485,975h1v1h-1zM507,975h1v1h-1zM530,975h1v1h-1zM552,975h1v1h-1zM574,975h1v1h-1zM596,975h1v1h-1zM619,975h1v1h-1zM641,975h1v1h-1zM663,975h1v1h-1zM686,975h1v1h-1zM708,975h1v1h-1zM730,975h1v1h-1zM752,975h1v1h-1zM775,975h1v1h-1zM797,975h1v1h-1zM819,975h1v1h-1zM842,975h1v1h-1zM864,975h1v1h-1zM886,975h1v1h-1zM908,975h1v1h-1zM931,975h1v1h-1zM953,975h1v1h-1zM975,975h1v1h-1zM998,975h1v1h-1zM1020,975h1v1h-1zM1042,975h1v1h-1zM1064,975h1v1h-1zM1087,975h1v1h-1zM1109,975h1v1h-1zM1131,975h1v1h-1zM1154,975h1v1h-1zM1176,975h1v1h-1zM1198,975h1v1h-1zM1220,975h1v1h-1zM1243,975h1v1h-1zM1265,975h1v1h-1zM1287,975h1v1h-1zM1310,975h1v1h-1zM1332,975h1v1h-1zM1354,975h1v1h-1zM1376,975h1v1h-1zM1399,975h1v1h-1zM1421,975h1v1h-1zM1443,975h1v1h-1zM1466,975h1v1h-1zM1488,975h1v1h-1zM1510,975h1v1h-1zM1532,975h1v1h-1zM1555,975h1v1h-1zM1577,975h1v1h-1zM1599,975h1v1h-1zM1622,975h1v1h-1zM1644,975h1v1h-1zM1666,975h1v1h-1zM1688,975h1v1h-1zM1711,975h1v1h-1zM1733,975h1v1h-1zM1755,975h1v1h-1zM1778,975h1v1h-1zM1800,975h1v1h-1zM1822,975h1v1h-1zM1844,975h1v1h-1zM1867,975h1v1h-1zM1889,975h1v1h-1zM17,997h1v1h-1zM39,997h1v1h-1zM62,997h1v1h-1zM84,997h1v1h-1zM106,997h1v1h-1zM128,997h1v1h-1zM151,997h1v1h-1zM173,997h1v1h-1zM195,997h1v1h-1zM218,997h1v1h-1zM240,997h1v1h-1zM262,997h1v1h-1zM284,997h1v1h-1zM307,997h1v1h-1zM329,997h1v1h-1zM351,997h1v1h-1zM374,997h1v1h-1zM396,997h1v1h-1zM418,997h1v1h-1zM440,997h1v1h-1zM463,997h1v1h-1zM485,997h1v1h-1zM507,997h1v1h-1zM530,997h1v1h-1zM552,997h1v1h-1zM574,997h1v1h-1zM596,997h1v1h-1zM619,997h1v1h-1zM641,997h1v1h-1zM663,997h1v1h-1zM686,997h1v1h-1zM708,997h1v1h-1zM730,997h1v1h-1zM752,997h1v1h-1zM775,997h1v1h-1zM797,997h1v1h-1zM819,997h1v1h-1zM842,997h1v1h-1zM864,997h1v1h-1zM886,997h1v1h-1zM908,997h1v1h-1zM931,997h1v1h-1zM953,997h1v1h-1zM975,997h1v1h-1zM998,997h1v1h-1zM1020,997h1v1h-1zM1042,997h1v1h-1zM1064,997h1v1h-1zM1087,997h1v1h-1zM1109,997h1v1h-1zM1131,997h1v1h-1zM1154,997h1v1h-1zM1176,997h1v1h-1zM1198,997h1v1h-1zM1220,997h1v1h-1zM1243,997h1v1h-1zM1265,997h1v1h-1zM1287,997h1v1h-1zM1310,997h1v1h-1zM1332,997h1v1h-1zM1354,997h1v1h-1zM1376,997h1v1h-1zM1399,997h1v1h-1zM1421,997h1v1h-1zM1443,997h1v1h-1zM1466,997h1v1h-1zM1488,997h1v1h-1zM1510,997h1v1h-1zM1532,997h1v1h-1zM1555,997h1v1h-1zM1577,997h1v1h-1zM1599,997h1v1h-1zM1622,997h1v1h-1zM1644,997h1v1h-1zM1666,997h1v1h-1zM1688,997h1v1h-1zM1711,997h1v1h-1zM1733,997h1v1h-1zM1755,997h1v1h-1zM1778,997h1v1h-1zM1800,997h1v1h-1zM1822,997h1v1h-1zM1844,997h1v1h-1zM1867,997h1v1h-1zM1889,997h1v1h-1zM17,1020h1v1h-1zM39,1020h1v1h-1zM62,1020h1v1h-1zM84,1020h1v1h-1zM106,1020h1v1h-1zM128,1020h1v1h-1zM151,1020h1v1h-1zM173,1020h1v1h-1zM195,1020h1v1h-1zM218,1020h1v1h-1zM240,1020h1v1h-1zM262,1020h1v1h-1zM284,1020h1v1h-1zM307,1020h1v1h-1zM329,1020h1v1h-1zM351,1020h1v1h-1zM374,1020h1v1h-1zM396,1020h1v1h-1zM418,1020h1v1h-1zM440,1020h1v1h-1zM463,1020h1v1h-1zM485,1020h1v1h-1zM507,1020h1v1h-1zM530,1020h1v1h-1zM552,1020h1v1h-1zM574,1020h1v1h-1zM596,1020h1v1h-1zM619,1020h1v1h-1zM641,1020h1v1h-1zM663,1020h1v1h-1zM686,1020h1v1h-1zM708,1020h1v1h-1zM730,1020h1v1h-1zM752,1020h1v1h-1zM775,1020h1v1h-1zM797,1020h1v1h-1zM819,1020h1v1h-1zM842,1020h1v1h-1zM864,1020h1v1h-1zM886,1020h1v1h-1zM908,1020h1v1h-1zM931,1020h1v1h-1zM953,1020h1v1h-1zM975,1020h1v1h-1zM998,1020h1v1h-1zM1020,1020h1v1h-1zM1042,1020h1v1h-1zM1064,1020h1v1h-1zM1087,1020h1v1h-1zM1109,1020h1v1h-1zM1131,1020h1v1h-1zM1154,1020h1v1h-1zM1176,1020h1v1h-1zM1198,1020h1v1h-1zM1220,1020h1v1h-1zM1243,1020h1v1h-1zM1265,1020h1v1h-1zM1287,1020h1v1h-1zM1310,1020h1v1h-1zM1332,1020h1v1h-1zM1354,1020h1v1h-1zM1376,1020h1v1h-1zM1399,1020h1v1h-1zM1421,1020h1v1h-1zM1443,1020h1v1h-1zM1466,1020h1v1h-1zM1488,1020h1v1h-1zM1510,1020h1v1h-1zM1532,1020h1v1h-1zM1555,1020h1v1h-1zM1577,1020h1v1h-1zM1599,1020h1v1h-1zM1622,1020h1v1h-1zM1644,1020h1v1h-1zM1666,1020h1v1h-1zM1688,1020h1v1h-1zM1711,1020h1v1h-1zM1733,1020h1v1h-1zM1755,1020h1v1h-1zM1778,1020h1v1h-1zM1800,1020h1v1h-1zM1822,1020h1v1h-1zM1844,1020h1v1h-1zM1867,1020h1v1h-1zM1889,1020h1v1h-1zM17,1042h1v1h-1zM39,1042h1v1h-1zM62,1042h1v1h-1zM84,1042h1v1h-1zM106,1042h1v1h-1zM128,1042h1v1h-1zM151,1042h1v1h-1zM173,1042h1v1h-1zM195,1042h1v1h-1zM218,1042h1v1h-1zM240,1042h1v1h-1zM262,1042h1v1h-1zM284,1042h1v1h-1zM307,1042h1v1h-1zM329,1042h1v1h-1zM351,1042h1v1h-1zM374,1042h1v1h-1zM396,1042h1v1h-1zM418,1042h1v1h-1zM440,1042h1v1h-1zM463,1042h1v1h-1zM485,1042h1v1h-1zM507,1042h1v1h-1zM530,1042h1v1h-1zM552,1042h1v1h-1zM574,1042h1v1h-1zM596,1042h1v1h-1zM619,1042h1v1h-1zM641,1042h1v1h-1zM663,1042h1v1h-1zM686,1042h1v1h-1zM708,1042h1v1h-1zM730,1042h1v1h-1zM752,1042h1v1h-1zM775,1042h1v1h-1zM797,1042h1v1h-1zM819,1042h1v1h-1zM842,1042h1v1h-1zM864,1042h1v1h-1zM886,1042h1v1h-1zM908,1042h1v1h-1zM931,1042h1v1h-1zM953,1042h1v1h-1zM975,1042h1v1h-1zM998,1042h1v1h-1zM1020,1042h1v1h-1zM1042,1042h1v1h-1zM1064,1042h1v1h-1zM1087,1042h1v1h-1zM1109,1042h1v1h-1zM1131,1042h1v1h-1zM1154,1042h1v1h-1zM1176,1042h1v1h-1zM1198,1042h1v1h-1zM1220,1042h1v1h-1zM1243,1042h1v1h-1zM1265,1042h1v1h-1zM1287,1042h1v1h-1zM1310,1042h1v1h-1zM1332,1042h1v1h-1zM1354,1042h1v1h-1zM1376,1042h1v1h-1zM1399,1042h1v1h-1zM1421,1042h1v1h-1zM1443,1042h1v1h-1zM1466,1042h1v1h-1zM1488,1042h1v1h-1zM1510,1042h1v1h-1zM1532,1042h1v1h-1zM1555,1042h1v1h-1zM1577,1042h1v1h-1zM1599,1042h1v1h-1zM1622,1042h1v1h-1zM1644,1042h1v1h-1zM1666,1042h1v1h-1zM1688,1042h1v1h-1zM1711,1042h1v1h-1zM1733,1042h1v1h-1zM1755,1042h1v1h-1zM1778,1042h1v1h-1zM1800,1042h1v1h-1zM1822,1042h1v1h-1zM1844,1042h1v1h-1zM1867,1042h1v1h-1zM1889,1042h1v1h-1z" fill="#000"/><rect x="12" y="1049" width="1896" height="1" fill="#f4fafe" /><line x1="1908.5" y1="612" x2="1908.5" y2="1050" stroke="#f4fafe" stroke-width="1"/><line x1="3" y1="1057.5" x2="1917" y2="1057.5" stroke="#98d4ee" stroke-width="1"/><g transform="translate(874.99,603.5) scale(0.9095,1)"><text style="font-kerning:none" font-size="13.6" font-weight="normal" fill="#101018">FET_DRAM.asc</text></g><g transform="translate(14,590)" fill="none" stroke="#1010c8"><path d="M0,7.5 H3.5" stroke-width="1"/><rect x="3" y="3" width="2.2" height="9" fill="#1010c8" stroke="none"/><path d="M5,4.5 L10,0 M5,10.5 L11,15.5" stroke-width="0.9"/><path d="M6.5,11.5 L10.5,15 L9.5,11 Z" fill="#1010c8" stroke="none"/></g><rect x="1811.5" y="590.5" width="30" height="16" rx="2.5" fill="url(#bt2)" stroke="#5a6a80"/><rect x="1844.5" y="590.5" width="30" height="16" rx="2.5" fill="url(#bt2)" stroke="#5a6a80"/><rect x="1877.5" y="590.5" width="30" height="16" rx="2.5" fill="url(#cl2)" stroke="#6a2a20"/><rect x="1821.5" y="597.5" width="10" height="4" rx="1" fill="#fff" stroke="#333a44"/><rect x="1854.5" y="593.5" width="10" height="8.5" rx="0.5" fill="#fff" stroke="#333a44"/><rect x="1857.5" y="596.5" width="4" height="2.5" fill="none" stroke="#333a44"/><path d="M1888.5,595.5 L1896.5,601.5 M1896.5,595.5 L1888.5,601.5" stroke="#333a44" stroke-width="4" stroke-linecap="round"/><path d="M1888.5,595.5 L1896.5,601.5 M1896.5,595.5 L1888.5,601.5" stroke="#fff" stroke-width="2"/><polyline points="195.5,786 195.5,775.5 407.5,775.5 407.5,730.5" fill="none" stroke="#2a2ad4" stroke-width="1.4"/><polyline points="396,730.5 486,730.5" fill="none" stroke="#2a2ad4" stroke-width="1.4"/><polyline points="474.5,730.5 474.5,775.5 596.5,775.5 596.5,836.5" fill="none" stroke="#2a2ad4" stroke-width="1.4"/><polyline points="418.5,714 418.5,708.5 752.5,708.5 752.5,719.5" fill="none" stroke="#2a2ad4" stroke-width="1.4"/><polyline points="195.5,873 195.5,886.5 752.5,886.5 752.5,807" fill="none" stroke="#2a2ad4" stroke-width="1.4"/><polyline points="596.5,847 596.5,908.5" fill="none" stroke="#2a2ad4" stroke-width="1.4"/><polyline points="413,714.5 425,714.5 418.5,730 413,714.5" fill="none" stroke="#20208c" stroke-width="1.2"/><polyline points="574,836.5 620,836.5" fill="none" stroke="#2a2ad4" stroke-width="1.4"/><path d="M574,853.5 L585,848.5 L590,847.2 L603,847.2 L608,848.5 L620,853.5" fill="none" stroke="#20208c" stroke-width="1.5"/><polyline points="580,819.5 592,819.5" fill="none" stroke="#20208c" stroke-width="1.2"/><polyline points="585.5,814 585.5,826" fill="none" stroke="#20208c" stroke-width="1.2"/><polyline points="571,908.5 622.5,908.5 596.5,933.5 571,908.5" fill="none" stroke="#2a2ad4" stroke-width="1.15"/><rect x="590.5" y="880.5" width="12" height="12" fill="#0000ff" /><circle cx="195.5" cy="829.7" r="43.5" fill="none" stroke="#20208c" stroke-width="1.1"/><circle cx="752.5" cy="763.4" r="43.8" fill="none" stroke="#20208c" stroke-width="1.1"/><polyline points="184,803.5 207,803.5" fill="none" stroke="#20208c" stroke-width="1.1"/><polyline points="195.5,792 195.5,814" fill="none" stroke="#20208c" stroke-width="1.1"/><polyline points="184,864.5 207,864.5" fill="none" stroke="#20208c" stroke-width="1.1"/><polyline points="741,736.5 764,736.5" fill="none" stroke="#20208c" stroke-width="1.1"/><polyline points="752.5,725 752.5,748" fill="none" stroke="#20208c" stroke-width="1.1"/><polyline points="741,792.5 764.5,792.5" fill="none" stroke="#20208c" stroke-width="1.1"/><g font-family='"Liberation Sans", sans-serif'><g transform="translate(169.78,705.9) scale(0.9427,1)"><text style="font-kerning:none" font-size="34.7" font-weight="bold" fill="#000">.tran 15m</text><rect x="86.22" y="-3.69" width="6.71" height="4.44" fill="#c8c7c7"/><rect x="97.70" y="-3.69" width="6.27" height="4.44" fill="#c8c7c7"/></g><g transform="translate(257.77,767.8) scale(0.9554,1)"><text style="font-kerning:none" font-size="34.7" font-weight="bold" fill="#000">Vbl</text></g><g transform="translate(478.98,700.7) scale(0.9407,1)"><text style="font-kerning:none" font-size="34.7" font-weight="bold" fill="#000">Vwl</text></g><g transform="translate(140.38,842.8) scale(0.9387,1)"><text style="font-kerning:none" font-size="34.7" font-weight="bold" fill="#000">Vbitline</text></g><g transform="translate(24.11,876) scale(0.9434,1)"><text style="font-kerning:none" font-size="34.7" font-weight="bold" fill="#000">Rser=1k Cpar=1n</text><rect x="98.81" y="-3.69" width="6.71" height="4.44" fill="#c8c7c7"/><rect x="110.28" y="-3.69" width="6.27" height="4.44" fill="#c8c7c7"/><rect x="246.37" y="-3.69" width="6.71" height="4.44" fill="#c8c7c7"/><rect x="257.84" y="-3.69" width="6.27" height="4.44" fill="#c8c7c7"/></g><g transform="translate(693.18,776.7) scale(0.9399,1)"><text style="font-kerning:none" font-size="34.7" font-weight="bold" fill="#000">Vwordline</text></g><g transform="translate(779.24,812.7) scale(0.9317,1)"><text style="font-kerning:none" font-size="34.7" font-weight="bold" fill="#000">Rser=1k</text><rect x="98.81" y="-3.69" width="6.71" height="4.44" fill="#c8c7c7"/><rect x="110.28" y="-3.69" width="6.27" height="4.44" fill="#c8c7c7"/></g><g transform="translate(608.50,819.6) scale(0.8435,1)"><text style="font-kerning:none" font-size="34.7" font-weight="bold" fill="#000">C1</text><rect x="26.44" y="-3.69" width="6.71" height="4.44" fill="#c8c7c7"/><rect x="37.92" y="-3.69" width="6.27" height="4.44" fill="#c8c7c7"/></g><g transform="translate(622.93,853.8) scale(0.8990,1)"><text style="font-kerning:none" font-size="34.7" font-weight="bold" fill="#000">1μ</text><rect x="1.39" y="-3.69" width="6.71" height="4.44" fill="#c8c7c7"/><rect x="12.86" y="-3.69" width="6.27" height="4.44" fill="#c8c7c7"/></g><g transform="translate(24.43,972.6) scale(0.9352,1)"><text style="font-kerning:none" font-size="34.7" font-weight="bold" fill="#000">PWL(0 0 10m 0 10.1m 3 10.5m 3 10.51m 0)</text><rect x="147.91" y="-3.69" width="6.71" height="4.44" fill="#c8c7c7"/><rect x="159.39" y="-3.69" width="6.27" height="4.44" fill="#c8c7c7"/><rect x="255.94" y="-3.69" width="6.71" height="4.44" fill="#c8c7c7"/><rect x="267.42" y="-3.69" width="6.27" height="4.44" fill="#c8c7c7"/><rect x="304.18" y="-3.69" width="6.71" height="4.44" fill="#c8c7c7"/><rect x="315.65" y="-3.69" width="6.27" height="4.44" fill="#c8c7c7"/><rect x="392.91" y="-3.69" width="6.71" height="4.44" fill="#c8c7c7"/><rect x="404.39" y="-3.69" width="6.27" height="4.44" fill="#c8c7c7"/><rect x="529.88" y="-3.69" width="6.71" height="4.44" fill="#c8c7c7"/><rect x="541.36" y="-3.69" width="6.27" height="4.44" fill="#c8c7c7"/><rect x="597.42" y="-3.69" width="6.71" height="4.44" fill="#c8c7c7"/><rect x="608.89" y="-3.69" width="6.27" height="4.44" fill="#c8c7c7"/></g><g transform="translate(24.43,1004.9) scale(0.9345,1)"><text style="font-kerning:none" font-size="34.7" font-weight="bold" fill="#000">PWL(0 0 5m 0 5.1m 3 6m 3 6.5m 0 10.3m 0 10.31m 3 10.4m 3 10.41m 0 10.6m 0 10.61m 3 10.7m 3 10.71m 0)</text><rect x="265.58" y="-3.69" width="6.71" height="4.44" fill="#c8c7c7"/><rect x="277.06" y="-3.69" width="6.27" height="4.44" fill="#c8c7c7"/><rect x="560.72" y="-3.69" width="6.71" height="4.44" fill="#c8c7c7"/><rect x="572.19" y="-3.69" width="6.27" height="4.44" fill="#c8c7c7"/><rect x="697.69" y="-3.69" width="6.71" height="4.44" fill="#c8c7c7"/><rect x="709.16" y="-3.69" width="6.27" height="4.44" fill="#c8c7c7"/><rect x="765.23" y="-3.69" width="6.71" height="4.44" fill="#c8c7c7"/><rect x="776.70" y="-3.69" width="6.27" height="4.44" fill="#c8c7c7"/><rect x="853.96" y="-3.69" width="6.71" height="4.44" fill="#c8c7c7"/><rect x="865.43" y="-3.69" width="6.27" height="4.44" fill="#c8c7c7"/><rect x="990.93" y="-3.69" width="6.71" height="4.44" fill="#c8c7c7"/><rect x="1002.40" y="-3.69" width="6.27" height="4.44" fill="#c8c7c7"/><rect x="1058.46" y="-3.69" width="6.71" height="4.44" fill="#c8c7c7"/><rect x="1069.94" y="-3.69" width="6.27" height="4.44" fill="#c8c7c7"/><rect x="1147.20" y="-3.69" width="6.71" height="4.44" fill="#c8c7c7"/><rect x="1158.67" y="-3.69" width="6.27" height="4.44" fill="#c8c7c7"/><rect x="1284.17" y="-3.69" width="6.71" height="4.44" fill="#c8c7c7"/><rect x="1295.64" y="-3.69" width="6.27" height="4.44" fill="#c8c7c7"/><rect x="1351.70" y="-3.69" width="6.71" height="4.44" fill="#c8c7c7"/><rect x="1363.18" y="-3.69" width="6.27" height="4.44" fill="#c8c7c7"/><rect x="1440.44" y="-3.69" width="6.71" height="4.44" fill="#c8c7c7"/><rect x="1451.91" y="-3.69" width="6.27" height="4.44" fill="#c8c7c7"/><rect x="1577.41" y="-3.69" width="6.71" height="4.44" fill="#c8c7c7"/><rect x="1588.88" y="-3.69" width="6.27" height="4.44" fill="#c8c7c7"/><rect x="1644.94" y="-3.69" width="6.71" height="4.44" fill="#c8c7c7"/><rect x="1656.42" y="-3.69" width="6.27" height="4.44" fill="#c8c7c7"/></g><g transform="translate(417.9,905.59) rotate(-90) scale(0.9889,1)"><text style="font-kerning:none" font-size="34.7" font-weight="bold" fill="#000">2N4117</text><rect x="65.04" y="-3.69" width="6.71" height="4.44" fill="#c8c7c7"/><rect x="76.52" y="-3.69" width="6.27" height="4.44" fill="#c8c7c7"/><rect x="84.34" y="-3.69" width="6.71" height="4.44" fill="#c8c7c7"/><rect x="95.81" y="-3.69" width="6.27" height="4.44" fill="#c8c7c7"/></g><g transform="translate(474.3,823.95) rotate(-90) scale(0.8624,1)"><text style="font-kerning:none" font-size="34.7" font-weight="bold" fill="#000">J1</text><rect x="20.68" y="-3.69" width="6.71" height="4.44" fill="#c8c7c7"/><rect x="32.16" y="-3.69" width="6.27" height="4.44" fill="#c8c7c7"/></g></g><rect x="0" y="1059" width="1920" height="21" fill="#f0f0f0" /><line x1="103" y1="1077.5" x2="262" y2="1077.5" stroke="#a8a8a8" stroke-width="1"/><line x1="263" y1="1077.5" x2="422" y2="1077.5" stroke="#a8a8a8" stroke-width="1"/><line x1="423" y1="1077.5" x2="722" y2="1077.5" stroke="#a8a8a8" stroke-width="1"/><line x1="723" y1="1077.5" x2="884" y2="1077.5" stroke="#a8a8a8" stroke-width="1"/><line x1="885" y1="1077.5" x2="1045" y2="1077.5" stroke="#a8a8a8" stroke-width="1"/><line x1="1046" y1="1077.5" x2="1367" y2="1077.5" stroke="#a8a8a8" stroke-width="1"/><line x1="1368" y1="1077.5" x2="1527" y2="1077.5" stroke="#a8a8a8" stroke-width="1"/><line x1="1528" y1="1077.5" x2="1920" y2="1077.5" stroke="#a8a8a8" stroke-width="1"/><g transform="translate(17,49)"><path d="M0.5,0.5 H10.5 L13.5,3.5 V14.5 H0.5 Z" fill="#fff" stroke="#000" stroke-width="1.1"/><path d="M10.5,0.5 V3.5 H13.5" fill="none" stroke="#000"/><path d="M2,10.5 L5,7.5 H8 L6,10.5 Z M7,7 L10,4 H13 L11,7 Z" fill="#e01020"/><path d="M4,8 L12,6.5" stroke="#e01020" stroke-width="1.5"/></g><g transform="translate(40,49)"><path d="M0.5,4.5 H5.5 L6.5,5.5 H11.5 V13.5 H0.5 Z" fill="#f0f090" stroke="#000"/><path d="M0.5,13.5 L4,8.5 H15.5 L12,13.5 Z" fill="#909020" stroke="#000"/><path d="M9,3 Q12,0 15,3 L14,4" fill="none" stroke="#000"/></g><g transform="translate(70,49)"><rect x="0.5" y="0.5" width="14" height="14" fill="#808000" stroke="#000"/><rect x="3" y="1" width="9" height="6" fill="#c8c890"/><rect x="3" y="9" width="9" height="5.5" fill="#000"/><rect x="9" y="10" width="2" height="3" fill="#fff"/></g><g transform="translate(101,49)"><path d="M0.5,5.5 Q0.5,1.5 5,1.5 H10.5 Q15.5,2 15.5,7.5 Q13.5,5 10.5,5.5 V8.5 H5.5 V5.5 Q2.5,5 0.5,5.5 Z" fill="#fff" stroke="#000" stroke-width="1.1"/><path d="M3,3.5 H12" stroke="#a0a0a0"/><rect x="5.5" y="8.5" width="5" height="7" fill="#0000b0"/><rect x="6.5" y="9" width="1.5" height="6" fill="#4040ff"/></g><g transform="translate(131,49)"><path d="M12.5,3 L7,9 L3,11.5 L0.5,11.5 M7,9 L10.5,11 L8.5,15 M11,4.5 L15,7 M11,4 L6.5,3.5" stroke="#000" stroke-width="1.9" fill="none"/><circle cx="14" cy="2" r="1.7" fill="#000"/><path d="M2,3.5 h1.2 M4,1.5 h1.2" stroke="#909090"/></g><g transform="translate(155,49)"><path d="M5,15 L1,8 L3,7 L5,9 V2 H7 V7 V1 H9 V7 V2 H11 V8 V4 H13 V11 L11,15 Z" fill="none" stroke="#b0b0b0"/></g><g transform="translate(186,49)"><circle cx="6" cy="6" r="5" fill="#fff" stroke="#000" stroke-width="1.6"/><path d="M9.5,9.5 L15,15" stroke="#000" stroke-width="2.6"/><path d="M3,6 H9 M6,3 V9" stroke="#000" stroke-width="1.5"/></g><g transform="translate(209,49)"><circle cx="6" cy="6" r="5" fill="#fff" stroke="#b4b4b4" stroke-width="1.6"/><path d="M9.5,9.5 L15,15" stroke="#b4b4b4" stroke-width="2.6"/></g><g transform="translate(232,49)"><circle cx="6" cy="6" r="5" fill="#fff" stroke="#000" stroke-width="1.6"/><path d="M9.5,9.5 L15,15" stroke="#000" stroke-width="2.6"/><path d="M3,6 H9" stroke="#000" stroke-width="1.5"/></g><g transform="translate(255,49)"><circle cx="6" cy="6" r="5" fill="#fff" stroke="#000" stroke-width="1.6"/><path d="M9.5,9.5 L15,15" stroke="#000" stroke-width="2.6"/><path d="M0,0 L14,15 M14,0 L1,14" stroke="#e01020" stroke-width="1.3"/></g><g transform="translate(286,49)"><path d="M1,0 V15 H16 M0,2 H1 M0,5 H1 M0,8 H1 M0,11 H1 M3,15 V16 M6,15 V16 M9,15 V16 M12,15 V16" stroke="#000" fill="none"/><path d="M2,4 L5,1 L8,4 L11,1 L15,4" stroke="#000" fill="none"/><path d="M2,7 L5,7 L8,8 L15,8" stroke="#e02020" stroke-width="1.5" fill="none"/><path d="M2,11 L6,10 L9,11 L15,11" stroke="#000080" stroke-width="1.5" fill="none"/></g><g transform="translate(309,49)"><path d="M1,0 V15 H16 M5,4 Q9,0 13,3 V12 Q9,15 5,12 Z" stroke="#b8b8b8" fill="none"/></g><g transform="translate(340,49)"><rect x="0.5" y="0.5" width="15" height="15" fill="#fff" stroke="#000080" stroke-width="1.2"/><rect x="1" y="1" width="15" height="3" fill="#000080"/><rect x="1" y="8" width="15" height="3" fill="#000080"/></g><g transform="translate(363,49)"><rect x="0.5" y="0.5" width="9" height="7" fill="#fff" stroke="#000080"/><rect x="0.5" y="0.5" width="9" height="2.5" fill="#000080"/><rect x="3.5" y="4.5" width="9" height="7" fill="#fff" stroke="#000080"/><rect x="3.5" y="4.5" width="9" height="2.5" fill="#000080"/><rect x="6.5" y="8.5" width="9" height="7" fill="#fff" stroke="#000080"/><rect x="6.5" y="8.5" width="9" height="2.5" fill="#000080"/></g><g transform="translate(386,49)"><rect x="0.5" y="0.5" width="8" height="7" fill="#fff" stroke="#000080"/><rect x="0.5" y="0.5" width="8" height="2.5" fill="#000080"/><rect x="3.5" y="4.5" width="8" height="7" fill="#fff" stroke="#000080"/><rect x="3.5" y="4.5" width="8" height="2.5" fill="#000080"/><rect x="6.5" y="8.5" width="8" height="7" fill="#fff" stroke="#000080"/><rect x="6.5" y="8.5" width="8" height="2.5" fill="#000080"/><path d="M12,1 H15 M12,1 V4 M12,1 L15,4" stroke="#000" fill="none"/></g><g transform="translate(417,49)"><path d="M4,0 L8,10 M12,0 L8,10" stroke="#000080" stroke-width="1.2"/><circle cx="5" cy="12.5" r="2.3" fill="none" stroke="#000080" stroke-width="1.3"/><circle cx="11" cy="12.5" r="2.3" fill="none" stroke="#000080" stroke-width="1.3"/></g><g transform="translate(441,49)"><path d="M0.5,0.5 H6.5 L8.5,2.5 V11.5 H0.5 Z" fill="#fff" stroke="#000"/><path d="M6.5,4.5 H12.5 L15.5,7.5 V15.5 H6.5 Z" fill="#fff" stroke="#000080" stroke-width="1.2"/><path d="M2,4 H6 M2,6 H6 M8,9 H13 M8,11 H13 M8,13 H13" stroke="#000"/></g><g transform="translate(464,49)"><rect x="0" y="2" width="13" height="13" rx="2" fill="#b0b0b0"/><rect x="8" y="9" width="8" height="6" fill="#d8d8d8" stroke="#b0b0b0"/></g><g transform="translate(486,49)"><path d="M1,8 L3,1 H6 V15 H0 Z M15,8 L13,1 H10 V15 H16 Z M6,5 H10 V10 H6 Z" fill="#000"/><rect x="2" y="9" width="2" height="3" fill="#fff"/><rect x="12" y="9" width="2" height="3" fill="#fff"/></g><g transform="translate(517,49)"><path d="M3.5,1.5 H12.5 V6.5 H3.5 Z" fill="#fff" stroke="#000"/><path d="M0.5,6.5 H15.5 V14.5 H0.5 Z" fill="#d8d8d8" stroke="#000"/></g><g transform="translate(540,49)"><path d="M3.5,0.5 H13.5 V5.5 H3.5 Z" fill="#fff" stroke="#000"/><path d="M0.5,5.5 H15.5 V13.5 H0.5 Z" fill="#fff" stroke="#000"/><path d="M2,9 H14" stroke="#000"/><rect x="5" y="11" width="6" height="2" fill="#e0e080"/></g><g transform="translate(572,49)"><path d="M2,12 L12,1 L14,3 L4,14 Z" fill="#f0e020" stroke="#000"/><path d="M1,15.5 H15" stroke="#0000c0" stroke-width="1.2"/></g><g transform="translate(594,49)"><path d="M8,0 V6 M0,6.5 H16 L8,15 Z" fill="#f0f0c0" stroke="#000" stroke-width="1.2"/></g><g transform="translate(617,49)"><rect x="0.5" y="1.5" width="15" height="10" fill="#f8f8d0" stroke="#000" stroke-width="1.2"/><path d="M8,11 V16" stroke="#000"/><text x="8" y="10" font-size="9" font-weight="bold" text-anchor="middle" fill="#000">A</text></g><g transform="translate(640,49)"><path d="M9,0 L13,3 L5,7 L12,11 L8,15.5" fill="none" stroke="#000" stroke-width="1.3"/></g><g transform="translate(663,49)"><path d="M7,0 V5.5 M7,10 V16 M1,5.5 H13 M1,10 H13" stroke="#000" stroke-width="1.5"/></g><g transform="translate(686,49)"><path d="M5,1 Q10,1 10,4 Q10,7 6.5,7.5 Q10,8 10,11.5 Q10,15 5,15" fill="none" stroke="#000" stroke-width="1.4"/></g><g transform="translate(709,49)"><path d="M1,3.5 H15 L8,11 Z" fill="#e8e8f0" stroke="#000" stroke-width="1.2"/><path d="M8,0 V16 M1,11.5 H15" stroke="#000" stroke-width="1.2"/></g><g transform="translate(732,49)"><path d="M4.5,2.5 H9 Q14,2.5 14,8 Q14,13.5 9,13.5 H4.5 Z" fill="#e8e8e8" stroke="#000" stroke-width="1.3"/><path d="M0,5 H4 M0,11 H4 M14,8 H16" stroke="#000" stroke-width="1.3"/></g><g transform="translate(755,49)"><path d="M5,15 L1,8 L3,6 L5,8 V2 L7,1 L8,6 L9,1 L11,2 L11,6 L13,3 L15,5 L13,12 L11,15 Z" fill="#fff" stroke="#000" stroke-width="1.2"/></g><g transform="translate(778,49)"><path d="M3,14 L1,8 L3,6 V3 L6,2 L8,3 L10,2 L13,4 V10 L11,14 Z" fill="#fff" stroke="#000" stroke-width="1.2"/></g><g transform="translate(801,49)"><path d="M2.5,6 Q5,1.5 9,2.5 Q13.5,4 13,9 Q12,13 8,13 Q5,13 3,10" fill="none" stroke="#000" stroke-width="1.4"/><path d="M0.5,3.5 L2.5,8 L6,5 Z" fill="#000"/></g><g transform="translate(824,49)"><path d="M13.5,6 Q11,1.5 7,2.5 Q2.5,4 3,9 Q4,13 8,13 Q11,13 13,10" fill="none" stroke="#b8b8b8" stroke-width="1.4"/><path d="M15.5,3.5 L13.5,8 L10,5 Z" fill="#b8b8b8"/></g><g transform="translate(847,49)"><path d="M1,15 V6 H5 M1,10 H4 M1,15 H5 M7,8 H16 M10,8 V15 M13,8 V15 M4,4 Q9,-1 14,4" fill="none" stroke="#b0b0b0" stroke-width="1.4"/></g><g transform="translate(870,49)"><path d="M1,15 V6 H5 M1,10 H4 M1,15 H5 M15,15 V6 H11 M15,10 H12 M15,15 H11 M4,4 Q9,-1 14,4" fill="none" stroke="#b0b0b0" stroke-width="1.4"/></g><g transform="translate(893,49)"><text x="0" y="14" font-family="Liberation Serif" font-style="italic" font-weight="bold" font-size="15" fill="#000" transform="scale(0.95,1)">Aa</text></g><g transform="translate(916,49)"><text x="0" y="12" font-family="Liberation Sans" font-weight="bold" font-size="12.5" fill="#000">.op</text></g>
</svg>
</body></html>
